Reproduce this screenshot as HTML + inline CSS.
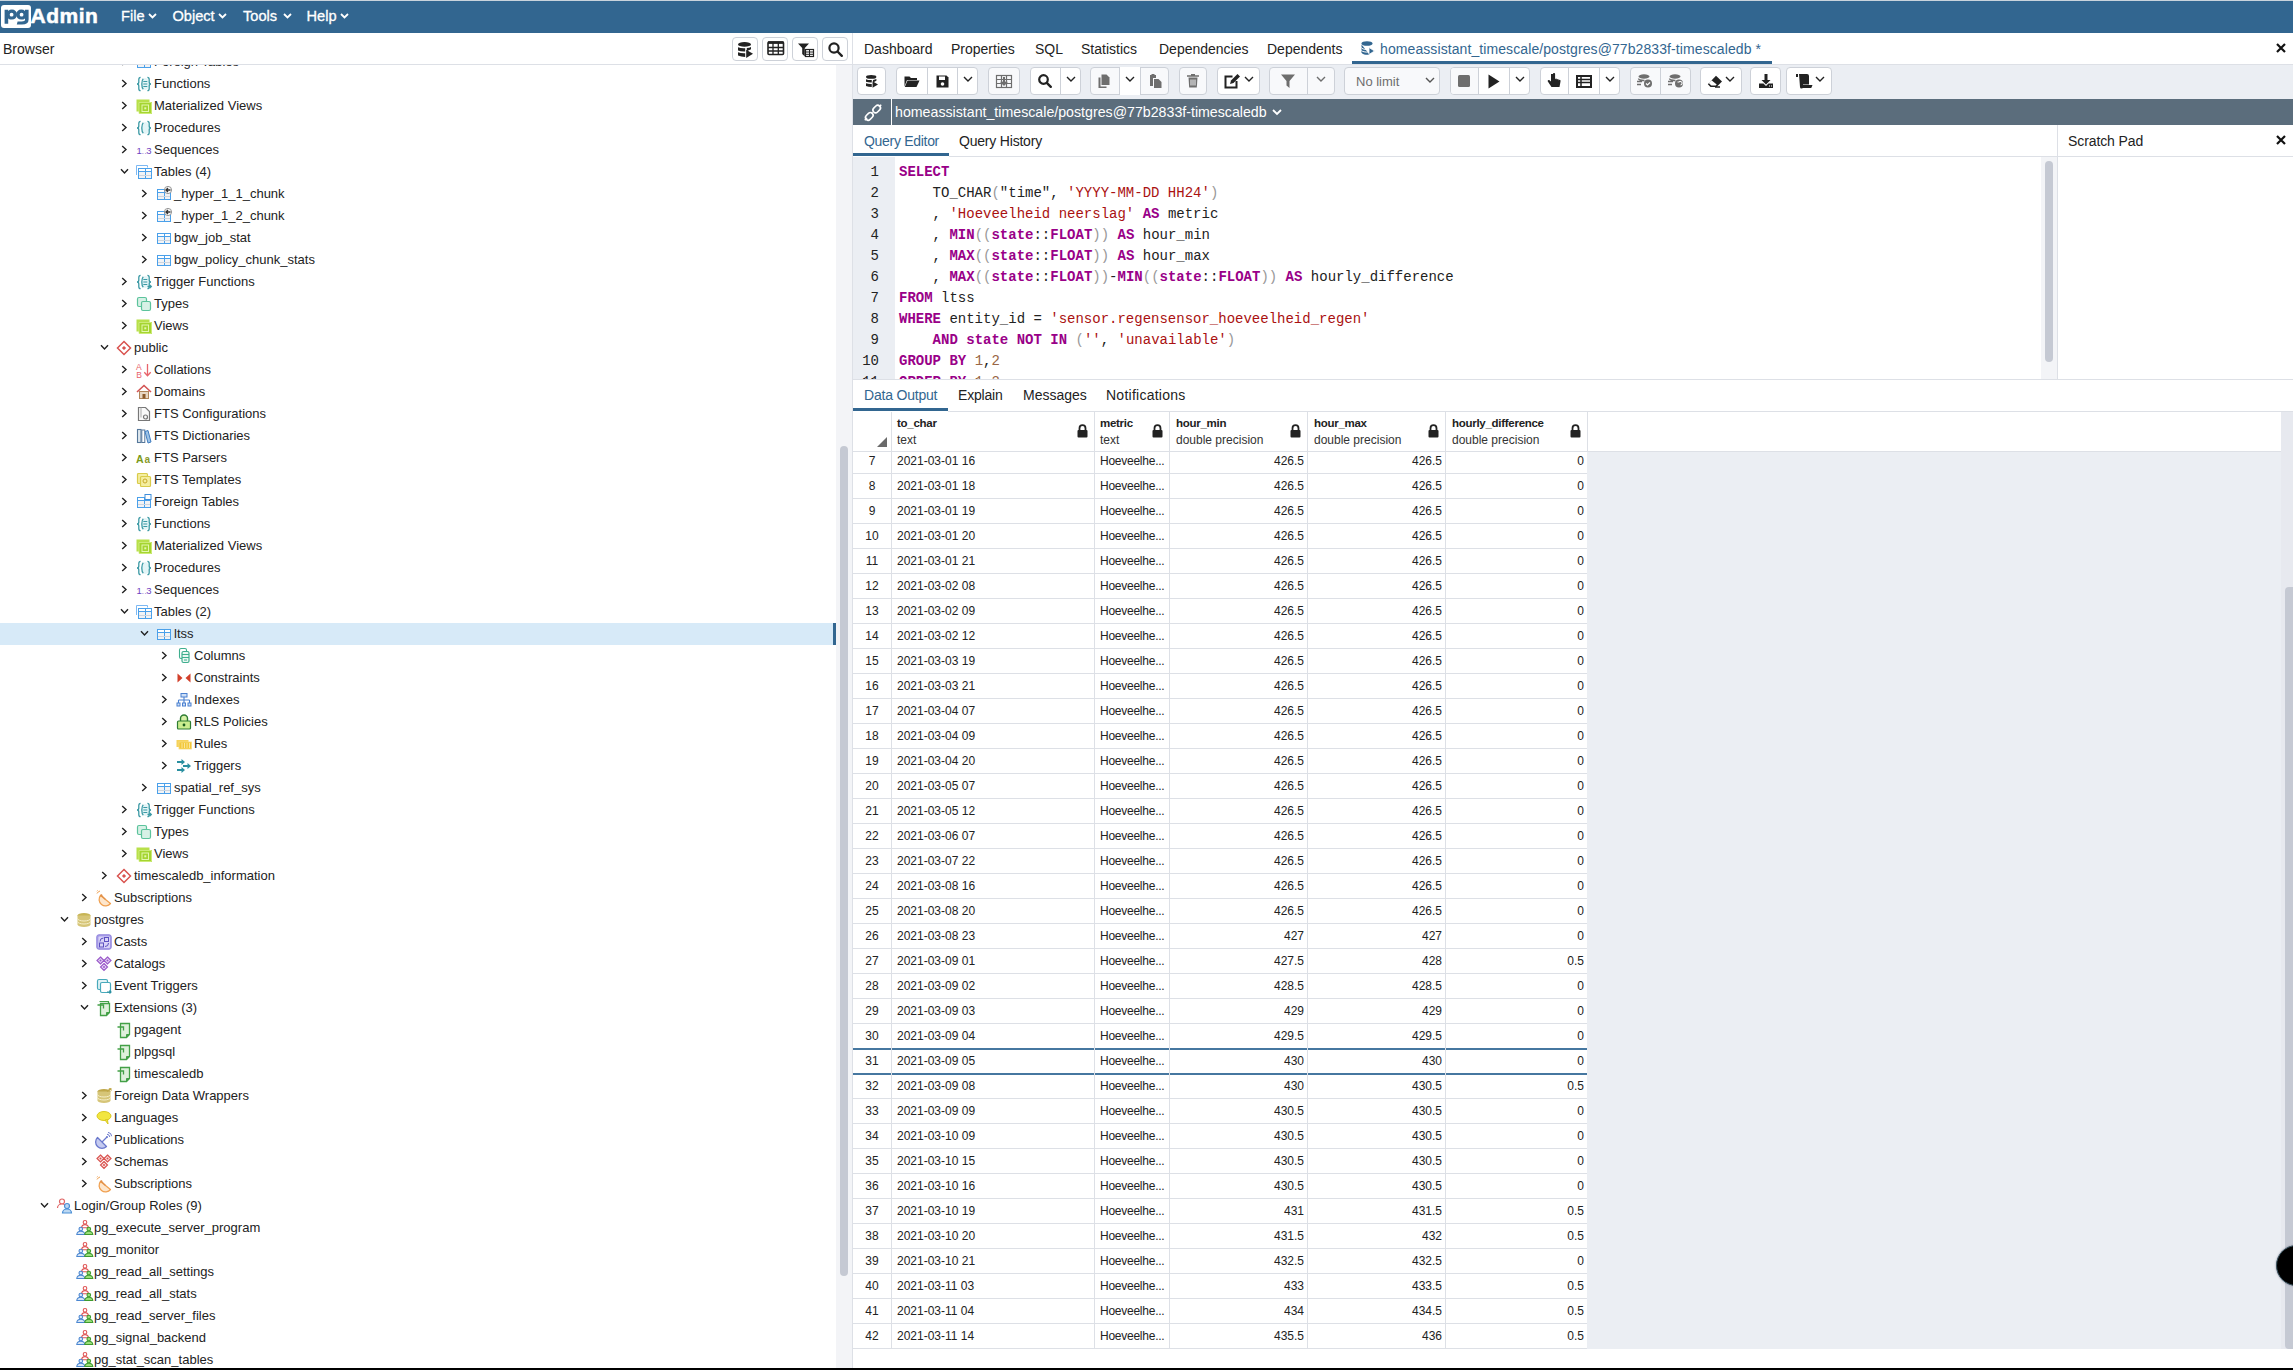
<!DOCTYPE html><html><head><meta charset="utf-8"><style>
*{box-sizing:border-box;margin:0;padding:0}
html,body{width:2293px;height:1370px;overflow:hidden;background:#fff;font-family:"Liberation Sans",sans-serif;color:#222}
.a{position:absolute}
.t{position:absolute;white-space:nowrap;line-height:1}
svg{position:absolute;overflow:visible}
</style></head><body><div class="a" style="left:0px;top:0px;width:2293px;height:33px;background:#326690"></div><div class="a" style="left:0px;top:0px;width:2293px;height:1px;background:#c9d3dc"></div><div class="a" style="left:1px;top:5px;width:30px;height:23px;background:#fff;border-radius:3px"></div><svg style="left:1px;top:5px;" width="30" height="23" viewBox="0 0 30 23"><path d="M3.6 4.8h3.6v1.2Q8.6 4.6 11 4.6a5 5 0 0 1 0 10Q8.6 14.6 7.2 13.4v5.4H3.6Z M10.6 7.8a1.9 1.9 0 1 0 0.01 3.8 1.9 1.9 0 1 0 0-3.8Z" fill="#326690" fill-rule="evenodd"/><path d="M27.6 4.8h-3.6v1.2Q22.6 4.6 20.2 4.6a5 5 0 0 0 0 10Q22.6 14.6 24 13.4v1.4Q24 16.4 20.6 16.4L16.6 16.4 15.8 19.4H21Q27.6 19.4 27.6 14.4Z M20.6 7.8a1.9 1.9 0 1 1-0.01 3.8 1.9 1.9 0 1 1 0-3.8Z" fill="#326690" fill-rule="evenodd"/></svg><div class="t" style="left:30.5px;top:4.5px;font-size:21px;color:#fff;font-weight:bold;letter-spacing:0.5px;-webkit-text-stroke:0.5px #fff;">Admin</div><div class="t" style="left:121px;top:9px;font-size:14.6px;color:#fff;font-weight:normal;-webkit-text-stroke:0.3px #fff;">File</div><svg style="left:148px;top:13px;" width="9" height="6" viewBox="0 0 9 6"><path d="M1 1 L4.5 4.5 L8 1" stroke="#fff" stroke-width="1.8" fill="none"/></svg><div class="t" style="left:172.5px;top:9px;font-size:14.6px;color:#fff;font-weight:normal;-webkit-text-stroke:0.3px #fff;">Object</div><svg style="left:218.1px;top:13px;" width="9" height="6" viewBox="0 0 9 6"><path d="M1 1 L4.5 4.5 L8 1" stroke="#fff" stroke-width="1.8" fill="none"/></svg><div class="t" style="left:243px;top:9px;font-size:14.6px;color:#fff;font-weight:normal;-webkit-text-stroke:0.3px #fff;">Tools</div><svg style="left:282.6px;top:13px;" width="9" height="6" viewBox="0 0 9 6"><path d="M1 1 L4.5 4.5 L8 1" stroke="#fff" stroke-width="1.8" fill="none"/></svg><div class="t" style="left:306.5px;top:9px;font-size:14.6px;color:#fff;font-weight:normal;-webkit-text-stroke:0.3px #fff;">Help</div><svg style="left:340.2px;top:13px;" width="9" height="6" viewBox="0 0 9 6"><path d="M1 1 L4.5 4.5 L8 1" stroke="#fff" stroke-width="1.8" fill="none"/></svg><div class="t" style="left:3px;top:42px;font-size:14px;color:#222;font-weight:normal;">Browser</div><div class="a" style="left:0px;top:64px;width:852px;height:1px;background:#dde0e6"></div><div class="a" style="left:732px;top:37px;width:26px;height:24px;border:1px solid #cdd1d8;border-radius:4px;background:#fff"></div><div class="a" style="left:762px;top:37px;width:26px;height:24px;border:1px solid #cdd1d8;border-radius:4px;background:#fff"></div><div class="a" style="left:792px;top:37px;width:26px;height:24px;border:1px solid #cdd1d8;border-radius:4px;background:#fff"></div><div class="a" style="left:822px;top:37px;width:26px;height:24px;border:1px solid #cdd1d8;border-radius:4px;background:#fff"></div><div class="a" style="left:852px;top:33px;width:1px;height:1337px;background:#dde0e6"></div><div class="a" style="left:836px;top:65px;width:16px;height:1303px;background:#f3f4f7"></div><div class="a" style="left:840px;top:446px;width:8px;height:830px;background:#c5c9d3;border-radius:4px"></div><div class="a" style="left:0;top:65px;width:836px;height:1303px;overflow:hidden"><svg style="left:121px;top:-8px" width="7" height="9" viewBox="0 0 7 9"><path d="M1.2 1 5 4.5 1.2 8" stroke="#222" stroke-width="1.4" fill="none"/></svg><svg style="left:136px;top:-11px" width="16" height="16" viewBox="0 0 16 16"><rect x="1.5" y="3.5" width="13" height="10" fill="#f2f3f5" stroke="#4aa0ea" stroke-width="1"/><rect x="2" y="4" width="12" height="2.5" fill="#fff"/><path d="M1.5 6.5h13M8.5 3.5v10" stroke="#4aa0ea" stroke-width="1"/><path d="M2 10.5h12" stroke="#cdd5de" stroke-width="1"/><rect x="9" y="0.5" width="6" height="5" fill="#fff" stroke="#3f8fdc" stroke-width="1"/></svg><div class="t" style="left:154px;top:-10px;font-size:13px">Foreign Tables</div><svg style="left:121px;top:14px" width="7" height="9" viewBox="0 0 7 9"><path d="M1.2 1 5 4.5 1.2 8" stroke="#222" stroke-width="1.4" fill="none"/></svg><svg style="left:136px;top:11px" width="16" height="16" viewBox="0 0 16 16"><ellipse cx="9.3" cy="8" rx="3.8" ry="6" fill="#e3f5f7"/><path d="M4.6 1.3Q2.8 1.3 2.8 3.5V6Q2.8 8 1 8Q2.8 8 2.8 10V12.5Q2.8 14.7 4.6 14.7" stroke="#3c9aa5" stroke-width="1.3" fill="none"/><path d="M7.3 2.8C5.3 4.5 5.3 11.5 7.3 13.2" stroke="#3c9aa5" stroke-width="1.3" fill="none"/><path d="M11.4 1.3Q13.2 1.3 13.2 3.5V6Q13.2 8 15 8Q13.2 8 13.2 10V12.5Q13.2 14.7 11.4 14.7" stroke="#3c9aa5" stroke-width="1.3" fill="none"/><path d="M7.3 5.5h4M7.3 8h4M7.3 10.5h4" stroke="#3c9aa5" stroke-width="1.2"/></svg><div class="t" style="left:154px;top:12px;font-size:13px">Functions</div><svg style="left:121px;top:36px" width="7" height="9" viewBox="0 0 7 9"><path d="M1.2 1 5 4.5 1.2 8" stroke="#222" stroke-width="1.4" fill="none"/></svg><svg style="left:136px;top:33px" width="16" height="16" viewBox="0 0 16 16"><rect x="0.5" y="1.5" width="13" height="12" fill="#b8e04a"/><rect x="3" y="4" width="13" height="12" fill="#a5d530"/><path d="M3 4.5h12.5v11H3Z" fill="none" stroke="#d6f08a" stroke-width="0.8"/><rect x="6" y="7" width="6.5" height="6.5" fill="none" stroke="#e4f7b0" stroke-width="1"/><rect x="8.3" y="9.3" width="2" height="2" fill="#e4f7b0"/></svg><div class="t" style="left:154px;top:34px;font-size:13px">Materialized Views</div><svg style="left:121px;top:58px" width="7" height="9" viewBox="0 0 7 9"><path d="M1.2 1 5 4.5 1.2 8" stroke="#222" stroke-width="1.4" fill="none"/></svg><svg style="left:136px;top:55px" width="16" height="16" viewBox="0 0 16 16"><ellipse cx="9.3" cy="8" rx="3.8" ry="6" fill="#e3f5f7"/><path d="M4.6 1.3Q2.8 1.3 2.8 3.5V6Q2.8 8 1 8Q2.8 8 2.8 10V12.5Q2.8 14.7 4.6 14.7" stroke="#3c9aa5" stroke-width="1.3" fill="none"/><path d="M7.3 2.8C5.3 4.5 5.3 11.5 7.3 13.2" stroke="#3c9aa5" stroke-width="1.3" fill="none"/><path d="M11.4 1.3Q13.2 1.3 13.2 3.5V6Q13.2 8 15 8Q13.2 8 13.2 10V12.5Q13.2 14.7 11.4 14.7" stroke="#3c9aa5" stroke-width="1.3" fill="none"/></svg><div class="t" style="left:154px;top:56px;font-size:13px">Procedures</div><svg style="left:121px;top:80px" width="7" height="9" viewBox="0 0 7 9"><path d="M1.2 1 5 4.5 1.2 8" stroke="#222" stroke-width="1.4" fill="none"/></svg><svg style="left:136px;top:77px" width="16" height="16" viewBox="0 0 16 16"><text x="0.5" y="12" font-family="Liberation Sans" font-size="9.5" fill="#6f42c1">1</text><text x="5.5" y="12" font-family="Liberation Sans" font-size="9.5" fill="#a58bd8">..</text><text x="10.3" y="12" font-family="Liberation Sans" font-size="9.5" fill="#6f42c1">3</text></svg><div class="t" style="left:154px;top:78px;font-size:13px">Sequences</div><svg style="left:120px;top:103px" width="9" height="7" viewBox="0 0 9 7"><path d="M1 1.2 4.5 5 8 1.2" stroke="#222" stroke-width="1.4" fill="none"/></svg><svg style="left:136px;top:99px" width="16" height="16" viewBox="0 0 16 16"><path d="M0.5 11V1.5h11v2" stroke="#7db8f2" stroke-width="1" fill="none"/><rect x="2.5" y="4.5" width="13" height="10" fill="#f2f3f5" stroke="#4aa0ea" stroke-width="1"/><rect x="3" y="5" width="12" height="2.5" fill="#fff"/><path d="M2.5 7.5h13M9.5 4.5v10" stroke="#4aa0ea" stroke-width="1"/><path d="M3 11.5h12" stroke="#cdd5de" stroke-width="1"/></svg><div class="t" style="left:154px;top:100px;font-size:13px">Tables (4)</div><svg style="left:141px;top:124px" width="7" height="9" viewBox="0 0 7 9"><path d="M1.2 1 5 4.5 1.2 8" stroke="#222" stroke-width="1.4" fill="none"/></svg><svg style="left:156px;top:121px" width="16" height="16" viewBox="0 0 16 16"><rect x="1.5" y="3.5" width="13" height="10" fill="#f2f3f5" stroke="#4aa0ea" stroke-width="1"/><rect x="2" y="4" width="12" height="2.5" fill="#fff"/><path d="M1.5 6.5h13M8.5 3.5v10" stroke="#4aa0ea" stroke-width="1"/><path d="M2 10.5h12" stroke="#cdd5de" stroke-width="1"/><circle cx="12" cy="4" r="3.6" fill="#fff" stroke="#888" stroke-width="0.9"/><path d="M14.5 4h-4.2M12 2 10 4l2 2" stroke="#333" stroke-width="1.4" fill="none"/></svg><div class="t" style="left:174px;top:122px;font-size:13px">_hyper_1_1_chunk</div><svg style="left:141px;top:146px" width="7" height="9" viewBox="0 0 7 9"><path d="M1.2 1 5 4.5 1.2 8" stroke="#222" stroke-width="1.4" fill="none"/></svg><svg style="left:156px;top:143px" width="16" height="16" viewBox="0 0 16 16"><rect x="1.5" y="3.5" width="13" height="10" fill="#f2f3f5" stroke="#4aa0ea" stroke-width="1"/><rect x="2" y="4" width="12" height="2.5" fill="#fff"/><path d="M1.5 6.5h13M8.5 3.5v10" stroke="#4aa0ea" stroke-width="1"/><path d="M2 10.5h12" stroke="#cdd5de" stroke-width="1"/><circle cx="12" cy="4" r="3.6" fill="#fff" stroke="#888" stroke-width="0.9"/><path d="M14.5 4h-4.2M12 2 10 4l2 2" stroke="#333" stroke-width="1.4" fill="none"/></svg><div class="t" style="left:174px;top:144px;font-size:13px">_hyper_1_2_chunk</div><svg style="left:141px;top:168px" width="7" height="9" viewBox="0 0 7 9"><path d="M1.2 1 5 4.5 1.2 8" stroke="#222" stroke-width="1.4" fill="none"/></svg><svg style="left:156px;top:165px" width="16" height="16" viewBox="0 0 16 16"><rect x="1.5" y="3.5" width="13" height="10" fill="#f2f3f5" stroke="#4aa0ea" stroke-width="1"/><rect x="2" y="4" width="12" height="2.5" fill="#fff"/><path d="M1.5 6.5h13M8.5 3.5v10" stroke="#4aa0ea" stroke-width="1"/><path d="M2 10.5h12" stroke="#cdd5de" stroke-width="1"/></svg><div class="t" style="left:174px;top:166px;font-size:13px">bgw_job_stat</div><svg style="left:141px;top:190px" width="7" height="9" viewBox="0 0 7 9"><path d="M1.2 1 5 4.5 1.2 8" stroke="#222" stroke-width="1.4" fill="none"/></svg><svg style="left:156px;top:187px" width="16" height="16" viewBox="0 0 16 16"><rect x="1.5" y="3.5" width="13" height="10" fill="#f2f3f5" stroke="#4aa0ea" stroke-width="1"/><rect x="2" y="4" width="12" height="2.5" fill="#fff"/><path d="M1.5 6.5h13M8.5 3.5v10" stroke="#4aa0ea" stroke-width="1"/><path d="M2 10.5h12" stroke="#cdd5de" stroke-width="1"/></svg><div class="t" style="left:174px;top:188px;font-size:13px">bgw_policy_chunk_stats</div><svg style="left:121px;top:212px" width="7" height="9" viewBox="0 0 7 9"><path d="M1.2 1 5 4.5 1.2 8" stroke="#222" stroke-width="1.4" fill="none"/></svg><svg style="left:136px;top:209px" width="16" height="16" viewBox="0 0 16 16"><ellipse cx="9.3" cy="8" rx="3.8" ry="6" fill="#e3f5f7"/><path d="M4.6 1.3Q2.8 1.3 2.8 3.5V6Q2.8 8 1 8Q2.8 8 2.8 10V12.5Q2.8 14.7 4.6 14.7" stroke="#3c9aa5" stroke-width="1.3" fill="none"/><path d="M7.3 2.8C5.3 4.5 5.3 11.5 7.3 13.2" stroke="#3c9aa5" stroke-width="1.3" fill="none"/><path d="M11.4 1.3Q13.2 1.3 13.2 3.5V6Q13.2 8 15 8Q13.2 8 13.2 10V12.5Q13.2 14.7 11.4 14.7" stroke="#3c9aa5" stroke-width="1.3" fill="none"/><path d="M7.3 5.5h4M7.3 8h4M7.3 10.5h4" stroke="#3c9aa5" stroke-width="1.2"/><path d="M11.5 12.5h3.5M13.5 10.8l1.8 1.7-1.8 1.7" stroke="#3c9aa5" stroke-width="1.3" fill="none"/></svg><div class="t" style="left:154px;top:210px;font-size:13px">Trigger Functions</div><svg style="left:121px;top:234px" width="7" height="9" viewBox="0 0 7 9"><path d="M1.2 1 5 4.5 1.2 8" stroke="#222" stroke-width="1.4" fill="none"/></svg><svg style="left:136px;top:231px" width="16" height="16" viewBox="0 0 16 16"><rect x="1.5" y="1.5" width="9" height="9" rx="1.5" fill="#d7f1e6" stroke="#5cc39c" stroke-width="1.2"/><rect x="5.5" y="5.5" width="9" height="9" rx="1.5" fill="#d7f1e6" stroke="#5cc39c" stroke-width="1.2"/></svg><div class="t" style="left:154px;top:232px;font-size:13px">Types</div><svg style="left:121px;top:256px" width="7" height="9" viewBox="0 0 7 9"><path d="M1.2 1 5 4.5 1.2 8" stroke="#222" stroke-width="1.4" fill="none"/></svg><svg style="left:136px;top:253px" width="16" height="16" viewBox="0 0 16 16"><rect x="0.5" y="1.5" width="13" height="12" fill="#b8e04a"/><rect x="3" y="4" width="13" height="12" fill="#a5d530"/><path d="M3 4.5h12.5v11H3Z" fill="none" stroke="#d6f08a" stroke-width="0.8"/><rect x="6" y="7" width="6.5" height="6.5" fill="none" stroke="#e4f7b0" stroke-width="1"/><rect x="8.3" y="9.3" width="2" height="2" fill="#e4f7b0"/></svg><div class="t" style="left:154px;top:254px;font-size:13px">Views</div><svg style="left:100px;top:279px" width="9" height="7" viewBox="0 0 9 7"><path d="M1 1.2 4.5 5 8 1.2" stroke="#222" stroke-width="1.4" fill="none"/></svg><svg style="left:116px;top:275px" width="16" height="16" viewBox="0 0 16 16"><path d="M8 1.5 14.5 8 8 14.5 1.5 8Z" fill="#fff" stroke="#d9534f" stroke-width="1.5"/><rect x="6.5" y="6.5" width="3" height="3" fill="#d9534f" transform="rotate(45 8 8)"/></svg><div class="t" style="left:134px;top:276px;font-size:13px">public</div><svg style="left:121px;top:300px" width="7" height="9" viewBox="0 0 7 9"><path d="M1.2 1 5 4.5 1.2 8" stroke="#222" stroke-width="1.4" fill="none"/></svg><svg style="left:136px;top:297px" width="16" height="16" viewBox="0 0 16 16"><text x="0" y="7.5" font-family="Liberation Sans" font-size="8.5" fill="#e8636b">A</text><text x="0.3" y="15.5" font-family="Liberation Sans" font-size="8.5" fill="#e8636b">B</text><path d="M11.5 2v11.5M8.3 10.2l3.2 3.6 3.2-3.6" stroke="#e8636b" stroke-width="1.3" fill="none"/></svg><div class="t" style="left:154px;top:298px;font-size:13px">Collations</div><svg style="left:121px;top:322px" width="7" height="9" viewBox="0 0 7 9"><path d="M1.2 1 5 4.5 1.2 8" stroke="#222" stroke-width="1.4" fill="none"/></svg><svg style="left:136px;top:319px" width="16" height="16" viewBox="0 0 16 16"><path d="M1 8 8 1.5 15 8" stroke="#d35454" stroke-width="1.6" fill="none"/><rect x="3.5" y="7.5" width="9" height="7" fill="#e7d7c4" stroke="#b0855a"/><rect x="6.5" y="10" width="3" height="4.5" fill="#8b5a2b"/></svg><div class="t" style="left:154px;top:320px;font-size:13px">Domains</div><svg style="left:121px;top:344px" width="7" height="9" viewBox="0 0 7 9"><path d="M1.2 1 5 4.5 1.2 8" stroke="#222" stroke-width="1.4" fill="none"/></svg><svg style="left:136px;top:341px" width="16" height="16" viewBox="0 0 16 16"><path d="M2.5 1.5h7l4 4v9h-11z" fill="#fafafa" stroke="#777" stroke-width="1.2"/><circle cx="9.5" cy="11" r="2" fill="none" stroke="#777" stroke-width="1.2"/><path d="M5 1.5v10" stroke="#aaa"/></svg><div class="t" style="left:154px;top:342px;font-size:13px">FTS Configurations</div><svg style="left:121px;top:366px" width="7" height="9" viewBox="0 0 7 9"><path d="M1.2 1 5 4.5 1.2 8" stroke="#222" stroke-width="1.4" fill="none"/></svg><svg style="left:136px;top:363px" width="16" height="16" viewBox="0 0 16 16"><rect x="1.5" y="1.5" width="3.5" height="13" fill="#dfe8ef" stroke="#56779a" stroke-width="1.1"/><rect x="5.8" y="2" width="3" height="12.5" fill="#fff" stroke="#56779a" stroke-width="1"/><path d="M9 3.5 12 2.5 15 14 12 15Z" fill="#9ec4e6" stroke="#3f7cc0" stroke-width="1"/></svg><div class="t" style="left:154px;top:364px;font-size:13px">FTS Dictionaries</div><svg style="left:121px;top:388px" width="7" height="9" viewBox="0 0 7 9"><path d="M1.2 1 5 4.5 1.2 8" stroke="#222" stroke-width="1.4" fill="none"/></svg><svg style="left:136px;top:385px" width="16" height="16" viewBox="0 0 16 16"><text x="0" y="12.5" font-family="Liberation Sans" font-size="10.5" font-weight="bold" fill="#7a9a1a">A</text><text x="8.5" y="12.5" font-family="Liberation Sans" font-size="10" font-weight="bold" fill="#8a9a2a">a</text></svg><div class="t" style="left:154px;top:386px;font-size:13px">FTS Parsers</div><svg style="left:121px;top:410px" width="7" height="9" viewBox="0 0 7 9"><path d="M1.2 1 5 4.5 1.2 8" stroke="#222" stroke-width="1.4" fill="none"/></svg><svg style="left:136px;top:407px" width="16" height="16" viewBox="0 0 16 16"><rect x="1.5" y="1.5" width="10" height="10" rx="1" fill="#f4eea0" stroke="#d9cb4a" stroke-width="1.2"/><rect x="4.5" y="4.5" width="10" height="10" rx="1" fill="#f4eea0" stroke="#d9cb4a" stroke-width="1.2"/><circle cx="9" cy="9" r="2" fill="none" stroke="#c8a82a"/></svg><div class="t" style="left:154px;top:408px;font-size:13px">FTS Templates</div><svg style="left:121px;top:432px" width="7" height="9" viewBox="0 0 7 9"><path d="M1.2 1 5 4.5 1.2 8" stroke="#222" stroke-width="1.4" fill="none"/></svg><svg style="left:136px;top:429px" width="16" height="16" viewBox="0 0 16 16"><rect x="1.5" y="3.5" width="13" height="10" fill="#f2f3f5" stroke="#4aa0ea" stroke-width="1"/><rect x="2" y="4" width="12" height="2.5" fill="#fff"/><path d="M1.5 6.5h13M8.5 3.5v10" stroke="#4aa0ea" stroke-width="1"/><path d="M2 10.5h12" stroke="#cdd5de" stroke-width="1"/><rect x="9" y="0.5" width="6" height="5" fill="#fff" stroke="#3f8fdc" stroke-width="1"/></svg><div class="t" style="left:154px;top:430px;font-size:13px">Foreign Tables</div><svg style="left:121px;top:454px" width="7" height="9" viewBox="0 0 7 9"><path d="M1.2 1 5 4.5 1.2 8" stroke="#222" stroke-width="1.4" fill="none"/></svg><svg style="left:136px;top:451px" width="16" height="16" viewBox="0 0 16 16"><ellipse cx="9.3" cy="8" rx="3.8" ry="6" fill="#e3f5f7"/><path d="M4.6 1.3Q2.8 1.3 2.8 3.5V6Q2.8 8 1 8Q2.8 8 2.8 10V12.5Q2.8 14.7 4.6 14.7" stroke="#3c9aa5" stroke-width="1.3" fill="none"/><path d="M7.3 2.8C5.3 4.5 5.3 11.5 7.3 13.2" stroke="#3c9aa5" stroke-width="1.3" fill="none"/><path d="M11.4 1.3Q13.2 1.3 13.2 3.5V6Q13.2 8 15 8Q13.2 8 13.2 10V12.5Q13.2 14.7 11.4 14.7" stroke="#3c9aa5" stroke-width="1.3" fill="none"/><path d="M7.3 5.5h4M7.3 8h4M7.3 10.5h4" stroke="#3c9aa5" stroke-width="1.2"/></svg><div class="t" style="left:154px;top:452px;font-size:13px">Functions</div><svg style="left:121px;top:476px" width="7" height="9" viewBox="0 0 7 9"><path d="M1.2 1 5 4.5 1.2 8" stroke="#222" stroke-width="1.4" fill="none"/></svg><svg style="left:136px;top:473px" width="16" height="16" viewBox="0 0 16 16"><rect x="0.5" y="1.5" width="13" height="12" fill="#b8e04a"/><rect x="3" y="4" width="13" height="12" fill="#a5d530"/><path d="M3 4.5h12.5v11H3Z" fill="none" stroke="#d6f08a" stroke-width="0.8"/><rect x="6" y="7" width="6.5" height="6.5" fill="none" stroke="#e4f7b0" stroke-width="1"/><rect x="8.3" y="9.3" width="2" height="2" fill="#e4f7b0"/></svg><div class="t" style="left:154px;top:474px;font-size:13px">Materialized Views</div><svg style="left:121px;top:498px" width="7" height="9" viewBox="0 0 7 9"><path d="M1.2 1 5 4.5 1.2 8" stroke="#222" stroke-width="1.4" fill="none"/></svg><svg style="left:136px;top:495px" width="16" height="16" viewBox="0 0 16 16"><ellipse cx="9.3" cy="8" rx="3.8" ry="6" fill="#e3f5f7"/><path d="M4.6 1.3Q2.8 1.3 2.8 3.5V6Q2.8 8 1 8Q2.8 8 2.8 10V12.5Q2.8 14.7 4.6 14.7" stroke="#3c9aa5" stroke-width="1.3" fill="none"/><path d="M7.3 2.8C5.3 4.5 5.3 11.5 7.3 13.2" stroke="#3c9aa5" stroke-width="1.3" fill="none"/><path d="M11.4 1.3Q13.2 1.3 13.2 3.5V6Q13.2 8 15 8Q13.2 8 13.2 10V12.5Q13.2 14.7 11.4 14.7" stroke="#3c9aa5" stroke-width="1.3" fill="none"/></svg><div class="t" style="left:154px;top:496px;font-size:13px">Procedures</div><svg style="left:121px;top:520px" width="7" height="9" viewBox="0 0 7 9"><path d="M1.2 1 5 4.5 1.2 8" stroke="#222" stroke-width="1.4" fill="none"/></svg><svg style="left:136px;top:517px" width="16" height="16" viewBox="0 0 16 16"><text x="0.5" y="12" font-family="Liberation Sans" font-size="9.5" fill="#6f42c1">1</text><text x="5.5" y="12" font-family="Liberation Sans" font-size="9.5" fill="#a58bd8">..</text><text x="10.3" y="12" font-family="Liberation Sans" font-size="9.5" fill="#6f42c1">3</text></svg><div class="t" style="left:154px;top:518px;font-size:13px">Sequences</div><svg style="left:120px;top:543px" width="9" height="7" viewBox="0 0 9 7"><path d="M1 1.2 4.5 5 8 1.2" stroke="#222" stroke-width="1.4" fill="none"/></svg><svg style="left:136px;top:539px" width="16" height="16" viewBox="0 0 16 16"><path d="M0.5 11V1.5h11v2" stroke="#7db8f2" stroke-width="1" fill="none"/><rect x="2.5" y="4.5" width="13" height="10" fill="#f2f3f5" stroke="#4aa0ea" stroke-width="1"/><rect x="3" y="5" width="12" height="2.5" fill="#fff"/><path d="M2.5 7.5h13M9.5 4.5v10" stroke="#4aa0ea" stroke-width="1"/><path d="M3 11.5h12" stroke="#cdd5de" stroke-width="1"/></svg><div class="t" style="left:154px;top:540px;font-size:13px">Tables (2)</div><div class="a" style="left:0;top:558px;width:836px;height:22px;background:#d7eaf8;border-right:3px solid #326690"></div><svg style="left:140px;top:565px" width="9" height="7" viewBox="0 0 9 7"><path d="M1 1.2 4.5 5 8 1.2" stroke="#222" stroke-width="1.4" fill="none"/></svg><svg style="left:156px;top:561px" width="16" height="16" viewBox="0 0 16 16"><rect x="1.5" y="3.5" width="13" height="10" fill="#f2f3f5" stroke="#4aa0ea" stroke-width="1"/><rect x="2" y="4" width="12" height="2.5" fill="#fff"/><path d="M1.5 6.5h13M8.5 3.5v10" stroke="#4aa0ea" stroke-width="1"/><path d="M2 10.5h12" stroke="#cdd5de" stroke-width="1"/></svg><div class="t" style="left:174px;top:562px;font-size:13px">ltss</div><svg style="left:161px;top:586px" width="7" height="9" viewBox="0 0 7 9"><path d="M1.2 1 5 4.5 1.2 8" stroke="#222" stroke-width="1.4" fill="none"/></svg><svg style="left:176px;top:583px" width="16" height="16" viewBox="0 0 16 16"><rect x="3.5" y="0.5" width="7" height="10" rx="1.5" fill="#fff" stroke="#3fae8e" stroke-width="1.1"/><rect x="6" y="3.5" width="7" height="11" rx="1.5" fill="#e9f7f2" stroke="#3fae8e" stroke-width="1.2"/><path d="M6 6.5h7M6 9.5h7M8 12h3" stroke="#3fae8e" stroke-width="1"/></svg><div class="t" style="left:194px;top:584px;font-size:13px">Columns</div><svg style="left:161px;top:608px" width="7" height="9" viewBox="0 0 7 9"><path d="M1.2 1 5 4.5 1.2 8" stroke="#222" stroke-width="1.4" fill="none"/></svg><svg style="left:176px;top:605px" width="16" height="16" viewBox="0 0 16 16"><path d="M1.5 3.5 6.5 8 1.5 12.5Z" fill="#d23f2a"/><path d="M14.5 3.5 9.5 8 14.5 12.5Z" fill="#d23f2a"/></svg><div class="t" style="left:194px;top:606px;font-size:13px">Constraints</div><svg style="left:161px;top:630px" width="7" height="9" viewBox="0 0 7 9"><path d="M1.2 1 5 4.5 1.2 8" stroke="#222" stroke-width="1.4" fill="none"/></svg><svg style="left:176px;top:627px" width="16" height="16" viewBox="0 0 16 16"><rect x="5" y="1.5" width="6" height="3.5" fill="#cfe0f7" stroke="#4a80d0"/><path d="M8 5v3M2.5 8h11M2.5 8v3M8 8v3M13.5 8v3" stroke="#4a80d0" stroke-width="1.1" fill="none"/><rect x="1" y="11" width="3" height="3" fill="#cfe0f7" stroke="#4a80d0"/><rect x="6.5" y="11" width="3" height="3" fill="#cfe0f7" stroke="#4a80d0"/><rect x="12" y="11" width="3" height="3" fill="#cfe0f7" stroke="#4a80d0"/></svg><div class="t" style="left:194px;top:628px;font-size:13px">Indexes</div><svg style="left:161px;top:652px" width="7" height="9" viewBox="0 0 7 9"><path d="M1.2 1 5 4.5 1.2 8" stroke="#222" stroke-width="1.4" fill="none"/></svg><svg style="left:176px;top:649px" width="16" height="16" viewBox="0 0 16 16"><path d="M4.5 7V4.5a3.5 3.5 0 0 1 7 0V7" stroke="#2e7d32" stroke-width="1.4" fill="#d8f0a8"/><rect x="1.5" y="7" width="13" height="8" rx="1" fill="#c9ec8e" stroke="#2e7d32" stroke-width="1.2"/><circle cx="8" cy="11" r="1.4" fill="#1b5e20"/></svg><div class="t" style="left:194px;top:650px;font-size:13px">RLS Policies</div><svg style="left:161px;top:674px" width="7" height="9" viewBox="0 0 7 9"><path d="M1.2 1 5 4.5 1.2 8" stroke="#222" stroke-width="1.4" fill="none"/></svg><svg style="left:176px;top:671px" width="16" height="16" viewBox="0 0 16 16"><rect x="0.5" y="4" width="12" height="7" fill="#f6d25a"/><rect x="3" y="6" width="12.5" height="7" fill="#f3c83a" stroke="#f6dc80" stroke-width="0.8"/><path d="M6 7v5M8.5 7v5M11 7v5M13.5 7v5" stroke="#fbe9a6" stroke-width="0.9"/></svg><div class="t" style="left:194px;top:672px;font-size:13px">Rules</div><svg style="left:161px;top:696px" width="7" height="9" viewBox="0 0 7 9"><path d="M1.2 1 5 4.5 1.2 8" stroke="#222" stroke-width="1.4" fill="none"/></svg><svg style="left:176px;top:693px" width="16" height="16" viewBox="0 0 16 16"><g fill="#2a8fa0"><path d="M1 3h4.5V1l3.5 3-3.5 3V5H1Z"/><path d="M1 11h4.5V9l3.5 3-3.5 3V13H1Z"/><path d="M7 7h4.5V5l3.5 3-3.5 3V9H7Z"/></g></svg><div class="t" style="left:194px;top:694px;font-size:13px">Triggers</div><svg style="left:141px;top:718px" width="7" height="9" viewBox="0 0 7 9"><path d="M1.2 1 5 4.5 1.2 8" stroke="#222" stroke-width="1.4" fill="none"/></svg><svg style="left:156px;top:715px" width="16" height="16" viewBox="0 0 16 16"><rect x="1.5" y="3.5" width="13" height="10" fill="#f2f3f5" stroke="#4aa0ea" stroke-width="1"/><rect x="2" y="4" width="12" height="2.5" fill="#fff"/><path d="M1.5 6.5h13M8.5 3.5v10" stroke="#4aa0ea" stroke-width="1"/><path d="M2 10.5h12" stroke="#cdd5de" stroke-width="1"/></svg><div class="t" style="left:174px;top:716px;font-size:13px">spatial_ref_sys</div><svg style="left:121px;top:740px" width="7" height="9" viewBox="0 0 7 9"><path d="M1.2 1 5 4.5 1.2 8" stroke="#222" stroke-width="1.4" fill="none"/></svg><svg style="left:136px;top:737px" width="16" height="16" viewBox="0 0 16 16"><ellipse cx="9.3" cy="8" rx="3.8" ry="6" fill="#e3f5f7"/><path d="M4.6 1.3Q2.8 1.3 2.8 3.5V6Q2.8 8 1 8Q2.8 8 2.8 10V12.5Q2.8 14.7 4.6 14.7" stroke="#3c9aa5" stroke-width="1.3" fill="none"/><path d="M7.3 2.8C5.3 4.5 5.3 11.5 7.3 13.2" stroke="#3c9aa5" stroke-width="1.3" fill="none"/><path d="M11.4 1.3Q13.2 1.3 13.2 3.5V6Q13.2 8 15 8Q13.2 8 13.2 10V12.5Q13.2 14.7 11.4 14.7" stroke="#3c9aa5" stroke-width="1.3" fill="none"/><path d="M7.3 5.5h4M7.3 8h4M7.3 10.5h4" stroke="#3c9aa5" stroke-width="1.2"/><path d="M11.5 12.5h3.5M13.5 10.8l1.8 1.7-1.8 1.7" stroke="#3c9aa5" stroke-width="1.3" fill="none"/></svg><div class="t" style="left:154px;top:738px;font-size:13px">Trigger Functions</div><svg style="left:121px;top:762px" width="7" height="9" viewBox="0 0 7 9"><path d="M1.2 1 5 4.5 1.2 8" stroke="#222" stroke-width="1.4" fill="none"/></svg><svg style="left:136px;top:759px" width="16" height="16" viewBox="0 0 16 16"><rect x="1.5" y="1.5" width="9" height="9" rx="1.5" fill="#d7f1e6" stroke="#5cc39c" stroke-width="1.2"/><rect x="5.5" y="5.5" width="9" height="9" rx="1.5" fill="#d7f1e6" stroke="#5cc39c" stroke-width="1.2"/></svg><div class="t" style="left:154px;top:760px;font-size:13px">Types</div><svg style="left:121px;top:784px" width="7" height="9" viewBox="0 0 7 9"><path d="M1.2 1 5 4.5 1.2 8" stroke="#222" stroke-width="1.4" fill="none"/></svg><svg style="left:136px;top:781px" width="16" height="16" viewBox="0 0 16 16"><rect x="0.5" y="1.5" width="13" height="12" fill="#b8e04a"/><rect x="3" y="4" width="13" height="12" fill="#a5d530"/><path d="M3 4.5h12.5v11H3Z" fill="none" stroke="#d6f08a" stroke-width="0.8"/><rect x="6" y="7" width="6.5" height="6.5" fill="none" stroke="#e4f7b0" stroke-width="1"/><rect x="8.3" y="9.3" width="2" height="2" fill="#e4f7b0"/></svg><div class="t" style="left:154px;top:782px;font-size:13px">Views</div><svg style="left:101px;top:806px" width="7" height="9" viewBox="0 0 7 9"><path d="M1.2 1 5 4.5 1.2 8" stroke="#222" stroke-width="1.4" fill="none"/></svg><svg style="left:116px;top:803px" width="16" height="16" viewBox="0 0 16 16"><path d="M8 1.5 14.5 8 8 14.5 1.5 8Z" fill="#fff" stroke="#d9534f" stroke-width="1.5"/><rect x="6.5" y="6.5" width="3" height="3" fill="#d9534f" transform="rotate(45 8 8)"/></svg><div class="t" style="left:134px;top:804px;font-size:13px">timescaledb_information</div><svg style="left:81px;top:828px" width="7" height="9" viewBox="0 0 7 9"><path d="M1.2 1 5 4.5 1.2 8" stroke="#222" stroke-width="1.4" fill="none"/></svg><svg style="left:96px;top:825px" width="16" height="16" viewBox="0 0 16 16"><path d="M4.5 5.5A6.3 6.3 0 0 0 14.5 13.5Z" fill="#fde6cc" stroke="#f0a050" stroke-width="1.3" stroke-linejoin="round"/><path d="M9.5 9.5 5 5" stroke="#e0904a" stroke-width="1.1"/><circle cx="5.3" cy="5.3" r="1.1" fill="#e0904a"/><path d="M1 3.5Q2 1.5 4 1M0.8 1.2 1.6 0.5" stroke="#f0a050" stroke-width="1"  fill="none"/></svg><div class="t" style="left:114px;top:826px;font-size:13px">Subscriptions</div><svg style="left:60px;top:851px" width="9" height="7" viewBox="0 0 9 7"><path d="M1 1.2 4.5 5 8 1.2" stroke="#222" stroke-width="1.4" fill="none"/></svg><svg style="left:76px;top:847px" width="16" height="16" viewBox="0 0 16 16"><ellipse cx="8" cy="3.5" rx="6.5" ry="2.5" fill="#c7b455"/><path d="M1.5 3.5v9a6.5 2.5 0 0 0 13 0v-9" fill="#d6c578"/><path d="M1.5 6.5a6.5 2.5 0 0 0 13 0M1.5 9.5a6.5 2.5 0 0 0 13 0" stroke="#f5efc8" stroke-width="1" fill="none"/></svg><div class="t" style="left:94px;top:848px;font-size:13px">postgres</div><svg style="left:81px;top:872px" width="7" height="9" viewBox="0 0 7 9"><path d="M1.2 1 5 4.5 1.2 8" stroke="#222" stroke-width="1.4" fill="none"/></svg><svg style="left:96px;top:869px" width="16" height="16" viewBox="0 0 16 16"><rect x="0.8" y="0.8" width="14.4" height="14.4" rx="2" fill="#aaa0e8" stroke="#8d80dc" stroke-width="1"/><rect x="2.5" y="2.5" width="11.5" height="11.5" rx="1" fill="#d9d3f7"/><rect x="8.5" y="3.5" width="4" height="4" fill="none" stroke="#5b4fc0" stroke-width="1"/><rect x="3.5" y="9" width="4" height="4" fill="none" stroke="#5b4fc0" stroke-width="1"/><path d="M4 7.5Q4 4 7.5 4M12.5 9Q12.5 12.5 9 12.5" stroke="#5b4fc0" stroke-width="1" fill="none"/></svg><div class="t" style="left:114px;top:870px;font-size:13px">Casts</div><svg style="left:81px;top:894px" width="7" height="9" viewBox="0 0 7 9"><path d="M1.2 1 5 4.5 1.2 8" stroke="#222" stroke-width="1.4" fill="none"/></svg><svg style="left:96px;top:891px" width="16" height="16" viewBox="0 0 16 16"><path d="M4.5 1 8 4.5 4.5 8 1 4.5Z M11.5 1 15 4.5 11.5 8 8 4.5Z M8 7.5 11.5 11 8 14.5 4.5 11Z" fill="#e5d6f5" stroke="#9a59c9" stroke-width="1.2"/><circle cx="4.5" cy="4.5" r="1" fill="#9a59c9"/><circle cx="11.5" cy="4.5" r="1" fill="#9a59c9"/><circle cx="8" cy="11" r="1" fill="#9a59c9"/></svg><div class="t" style="left:114px;top:892px;font-size:13px">Catalogs</div><svg style="left:81px;top:916px" width="7" height="9" viewBox="0 0 7 9"><path d="M1.2 1 5 4.5 1.2 8" stroke="#222" stroke-width="1.4" fill="none"/></svg><svg style="left:96px;top:913px" width="16" height="16" viewBox="0 0 16 16"><rect x="1.5" y="1.5" width="10" height="10" rx="1.5" fill="#e2f3f6" stroke="#48a9bb" stroke-width="1.2"/><rect x="4.5" y="4.5" width="10" height="10" rx="1.5" fill="#fff" stroke="#48a9bb" stroke-width="1.2"/><path d="M11 14h4M13.5 12.5l1.5 1.5-1.5 1.5" stroke="#2a8fa0" stroke-width="1.2" fill="none"/></svg><div class="t" style="left:114px;top:914px;font-size:13px">Event Triggers</div><svg style="left:80px;top:939px" width="9" height="7" viewBox="0 0 9 7"><path d="M1 1.2 4.5 5 8 1.2" stroke="#222" stroke-width="1.4" fill="none"/></svg><svg style="left:96px;top:935px" width="16" height="16" viewBox="0 0 16 16"><path d="M3.5 1.5h9v3" stroke="#43a047" stroke-width="1.2" fill="none"/><path d="M4.5 3.5h9v9l-3 3h-6z" fill="#dff0dc" stroke="#43a047" stroke-width="1.3"/><path d="M1.5 5h6v3.5" stroke="#43a047" stroke-width="1.3" fill="none"/><path d="M10.5 15.5v-3h3" fill="#43a047" stroke="#43a047"/></svg><div class="t" style="left:114px;top:936px;font-size:13px">Extensions (3)</div><svg style="left:116px;top:957px" width="16" height="16" viewBox="0 0 16 16"><path d="M4.5 1.5h9v11l-3 3h-6z" fill="#dff0dc" stroke="#43a047" stroke-width="1.3"/><path d="M1.5 5h6v3.5" stroke="#43a047" stroke-width="1.3" fill="none"/><path d="M10.5 15.5v-3h3" fill="#43a047" stroke="#43a047"/></svg><div class="t" style="left:134px;top:958px;font-size:13px">pgagent</div><svg style="left:116px;top:979px" width="16" height="16" viewBox="0 0 16 16"><path d="M4.5 1.5h9v11l-3 3h-6z" fill="#dff0dc" stroke="#43a047" stroke-width="1.3"/><path d="M1.5 5h6v3.5" stroke="#43a047" stroke-width="1.3" fill="none"/><path d="M10.5 15.5v-3h3" fill="#43a047" stroke="#43a047"/></svg><div class="t" style="left:134px;top:980px;font-size:13px">plpgsql</div><svg style="left:116px;top:1001px" width="16" height="16" viewBox="0 0 16 16"><path d="M4.5 1.5h9v11l-3 3h-6z" fill="#dff0dc" stroke="#43a047" stroke-width="1.3"/><path d="M1.5 5h6v3.5" stroke="#43a047" stroke-width="1.3" fill="none"/><path d="M10.5 15.5v-3h3" fill="#43a047" stroke="#43a047"/></svg><div class="t" style="left:134px;top:1002px;font-size:13px">timescaledb</div><svg style="left:81px;top:1026px" width="7" height="9" viewBox="0 0 7 9"><path d="M1.2 1 5 4.5 1.2 8" stroke="#222" stroke-width="1.4" fill="none"/></svg><svg style="left:96px;top:1023px" width="16" height="16" viewBox="0 0 16 16"><ellipse cx="8" cy="3.5" rx="6.5" ry="2.5" fill="#c0a84a"/><path d="M1.5 3.5v9a6.5 2.5 0 0 0 13 0v-9" fill="#d6c578"/><path d="M1.5 6.5a6.5 2.5 0 0 0 13 0M1.5 9.5a6.5 2.5 0 0 0 13 0" stroke="#f5efc8" stroke-width="1" fill="none"/><path d="M11 3.5 15 .5" stroke="#c0a84a" stroke-width="1.5"/><path d="M12.5 0.2h3v3" fill="#c0a84a"/></svg><div class="t" style="left:114px;top:1024px;font-size:13px">Foreign Data Wrappers</div><svg style="left:81px;top:1048px" width="7" height="9" viewBox="0 0 7 9"><path d="M1.2 1 5 4.5 1.2 8" stroke="#222" stroke-width="1.4" fill="none"/></svg><svg style="left:96px;top:1045px" width="16" height="16" viewBox="0 0 16 16"><ellipse cx="8" cy="6" rx="7" ry="4.5" fill="#f2e640" stroke="#d9c820" stroke-width="1"/><path d="M9 10l3 4 -0.5 -4.5Z" fill="#f2e640" stroke="#d9c820" stroke-width="1"/></svg><div class="t" style="left:114px;top:1046px;font-size:13px">Languages</div><svg style="left:81px;top:1070px" width="7" height="9" viewBox="0 0 7 9"><path d="M1.2 1 5 4.5 1.2 8" stroke="#222" stroke-width="1.4" fill="none"/></svg><svg style="left:96px;top:1067px" width="16" height="16" viewBox="0 0 16 16"><path d="M1.5 5.5A6.3 6.3 0 0 0 10.5 14.5Z" fill="#c5cbf0" stroke="#6a78cc" stroke-width="1.3" stroke-linejoin="round"/><path d="M6 10 11 5" stroke="#6a78cc" stroke-width="1.2"/><circle cx="11" cy="5" r="1" fill="#6a78cc"/><path d="M11 2.2Q13.6 2.6 13.8 5M12 0.4Q15.5 0.8 15.6 4.2" stroke="#6a78cc" stroke-width="1" fill="none"/></svg><div class="t" style="left:114px;top:1068px;font-size:13px">Publications</div><svg style="left:81px;top:1092px" width="7" height="9" viewBox="0 0 7 9"><path d="M1.2 1 5 4.5 1.2 8" stroke="#222" stroke-width="1.4" fill="none"/></svg><svg style="left:96px;top:1089px" width="16" height="16" viewBox="0 0 16 16"><path d="M4.5 1 8 4.5 4.5 8 1 4.5Z M11.5 1 15 4.5 11.5 8 8 4.5Z M8 7.5 11.5 11 8 14.5 4.5 11Z" fill="#fbe1e1" stroke="#d9534f" stroke-width="1.2"/><circle cx="4.5" cy="4.5" r="1" fill="#d9534f"/><circle cx="11.5" cy="4.5" r="1" fill="#d9534f"/><circle cx="8" cy="11" r="1" fill="#d9534f"/></svg><div class="t" style="left:114px;top:1090px;font-size:13px">Schemas</div><svg style="left:81px;top:1114px" width="7" height="9" viewBox="0 0 7 9"><path d="M1.2 1 5 4.5 1.2 8" stroke="#222" stroke-width="1.4" fill="none"/></svg><svg style="left:96px;top:1111px" width="16" height="16" viewBox="0 0 16 16"><path d="M4.5 5.5A6.3 6.3 0 0 0 14.5 13.5Z" fill="#fde6cc" stroke="#f0a050" stroke-width="1.3" stroke-linejoin="round"/><path d="M9.5 9.5 5 5" stroke="#e0904a" stroke-width="1.1"/><circle cx="5.3" cy="5.3" r="1.1" fill="#e0904a"/><path d="M1 3.5Q2 1.5 4 1M0.8 1.2 1.6 0.5" stroke="#f0a050" stroke-width="1"  fill="none"/></svg><div class="t" style="left:114px;top:1112px;font-size:13px">Subscriptions</div><svg style="left:40px;top:1137px" width="9" height="7" viewBox="0 0 9 7"><path d="M1 1.2 4.5 5 8 1.2" stroke="#222" stroke-width="1.4" fill="none"/></svg><svg style="left:56px;top:1133px" width="16" height="16" viewBox="0 0 16 16"><circle cx="6" cy="3.5" r="2.5" fill="#fff" stroke="#e06666" stroke-width="1.2"/><path d="M1.5 10a4.5 4 0 0 1 9 0" fill="#fff" stroke="#e06666" stroke-width="1.2"/><circle cx="11" cy="8" r="2.5" fill="#bcd8f2" stroke="#4a8fd6" stroke-width="1.2"/><path d="M6.5 15a4.5 4 0 0 1 9 0z" fill="#bcd8f2" stroke="#4a8fd6" stroke-width="1.2"/></svg><div class="t" style="left:74px;top:1134px;font-size:13px">Login/Group Roles (9)</div><svg style="left:76px;top:1155px" width="16" height="16" viewBox="0 0 16 16"><circle cx="9" cy="2.3" r="1.8" fill="#fff" stroke="#e05555" stroke-width="1.1"/><path d="M5.6 7.8Q5.8 4.6 9 4.6Q12.2 4.6 12.4 7.8Z" fill="#fff" stroke="#e05555" stroke-width="1.1"/><circle cx="4.8" cy="9" r="1.8" fill="#d6e6f8" stroke="#4a86d0" stroke-width="1.1"/><path d="M0.8 14.5Q1 11.2 4.8 11.2Q8.6 11.2 8.8 14.5Z" fill="#d6e6f8" stroke="#4a86d0" stroke-width="1.1"/><circle cx="12.8" cy="9" r="1.8" fill="#9be07a" stroke="#3e9a2e" stroke-width="1.1"/><path d="M8.8 14.5Q9 11.2 12.8 11.2Q16.6 11.2 16.8 14.5Z" fill="#9be07a" stroke="#3e9a2e" stroke-width="1.1"/></svg><div class="t" style="left:94px;top:1156px;font-size:13px">pg_execute_server_program</div><svg style="left:76px;top:1177px" width="16" height="16" viewBox="0 0 16 16"><circle cx="9" cy="2.3" r="1.8" fill="#fff" stroke="#e05555" stroke-width="1.1"/><path d="M5.6 7.8Q5.8 4.6 9 4.6Q12.2 4.6 12.4 7.8Z" fill="#fff" stroke="#e05555" stroke-width="1.1"/><circle cx="4.8" cy="9" r="1.8" fill="#d6e6f8" stroke="#4a86d0" stroke-width="1.1"/><path d="M0.8 14.5Q1 11.2 4.8 11.2Q8.6 11.2 8.8 14.5Z" fill="#d6e6f8" stroke="#4a86d0" stroke-width="1.1"/><circle cx="12.8" cy="9" r="1.8" fill="#9be07a" stroke="#3e9a2e" stroke-width="1.1"/><path d="M8.8 14.5Q9 11.2 12.8 11.2Q16.6 11.2 16.8 14.5Z" fill="#9be07a" stroke="#3e9a2e" stroke-width="1.1"/></svg><div class="t" style="left:94px;top:1178px;font-size:13px">pg_monitor</div><svg style="left:76px;top:1199px" width="16" height="16" viewBox="0 0 16 16"><circle cx="9" cy="2.3" r="1.8" fill="#fff" stroke="#e05555" stroke-width="1.1"/><path d="M5.6 7.8Q5.8 4.6 9 4.6Q12.2 4.6 12.4 7.8Z" fill="#fff" stroke="#e05555" stroke-width="1.1"/><circle cx="4.8" cy="9" r="1.8" fill="#d6e6f8" stroke="#4a86d0" stroke-width="1.1"/><path d="M0.8 14.5Q1 11.2 4.8 11.2Q8.6 11.2 8.8 14.5Z" fill="#d6e6f8" stroke="#4a86d0" stroke-width="1.1"/><circle cx="12.8" cy="9" r="1.8" fill="#9be07a" stroke="#3e9a2e" stroke-width="1.1"/><path d="M8.8 14.5Q9 11.2 12.8 11.2Q16.6 11.2 16.8 14.5Z" fill="#9be07a" stroke="#3e9a2e" stroke-width="1.1"/></svg><div class="t" style="left:94px;top:1200px;font-size:13px">pg_read_all_settings</div><svg style="left:76px;top:1221px" width="16" height="16" viewBox="0 0 16 16"><circle cx="9" cy="2.3" r="1.8" fill="#fff" stroke="#e05555" stroke-width="1.1"/><path d="M5.6 7.8Q5.8 4.6 9 4.6Q12.2 4.6 12.4 7.8Z" fill="#fff" stroke="#e05555" stroke-width="1.1"/><circle cx="4.8" cy="9" r="1.8" fill="#d6e6f8" stroke="#4a86d0" stroke-width="1.1"/><path d="M0.8 14.5Q1 11.2 4.8 11.2Q8.6 11.2 8.8 14.5Z" fill="#d6e6f8" stroke="#4a86d0" stroke-width="1.1"/><circle cx="12.8" cy="9" r="1.8" fill="#9be07a" stroke="#3e9a2e" stroke-width="1.1"/><path d="M8.8 14.5Q9 11.2 12.8 11.2Q16.6 11.2 16.8 14.5Z" fill="#9be07a" stroke="#3e9a2e" stroke-width="1.1"/></svg><div class="t" style="left:94px;top:1222px;font-size:13px">pg_read_all_stats</div><svg style="left:76px;top:1243px" width="16" height="16" viewBox="0 0 16 16"><circle cx="9" cy="2.3" r="1.8" fill="#fff" stroke="#e05555" stroke-width="1.1"/><path d="M5.6 7.8Q5.8 4.6 9 4.6Q12.2 4.6 12.4 7.8Z" fill="#fff" stroke="#e05555" stroke-width="1.1"/><circle cx="4.8" cy="9" r="1.8" fill="#d6e6f8" stroke="#4a86d0" stroke-width="1.1"/><path d="M0.8 14.5Q1 11.2 4.8 11.2Q8.6 11.2 8.8 14.5Z" fill="#d6e6f8" stroke="#4a86d0" stroke-width="1.1"/><circle cx="12.8" cy="9" r="1.8" fill="#9be07a" stroke="#3e9a2e" stroke-width="1.1"/><path d="M8.8 14.5Q9 11.2 12.8 11.2Q16.6 11.2 16.8 14.5Z" fill="#9be07a" stroke="#3e9a2e" stroke-width="1.1"/></svg><div class="t" style="left:94px;top:1244px;font-size:13px">pg_read_server_files</div><svg style="left:76px;top:1265px" width="16" height="16" viewBox="0 0 16 16"><circle cx="9" cy="2.3" r="1.8" fill="#fff" stroke="#e05555" stroke-width="1.1"/><path d="M5.6 7.8Q5.8 4.6 9 4.6Q12.2 4.6 12.4 7.8Z" fill="#fff" stroke="#e05555" stroke-width="1.1"/><circle cx="4.8" cy="9" r="1.8" fill="#d6e6f8" stroke="#4a86d0" stroke-width="1.1"/><path d="M0.8 14.5Q1 11.2 4.8 11.2Q8.6 11.2 8.8 14.5Z" fill="#d6e6f8" stroke="#4a86d0" stroke-width="1.1"/><circle cx="12.8" cy="9" r="1.8" fill="#9be07a" stroke="#3e9a2e" stroke-width="1.1"/><path d="M8.8 14.5Q9 11.2 12.8 11.2Q16.6 11.2 16.8 14.5Z" fill="#9be07a" stroke="#3e9a2e" stroke-width="1.1"/></svg><div class="t" style="left:94px;top:1266px;font-size:13px">pg_signal_backend</div><svg style="left:76px;top:1287px" width="16" height="16" viewBox="0 0 16 16"><circle cx="9" cy="2.3" r="1.8" fill="#fff" stroke="#e05555" stroke-width="1.1"/><path d="M5.6 7.8Q5.8 4.6 9 4.6Q12.2 4.6 12.4 7.8Z" fill="#fff" stroke="#e05555" stroke-width="1.1"/><circle cx="4.8" cy="9" r="1.8" fill="#d6e6f8" stroke="#4a86d0" stroke-width="1.1"/><path d="M0.8 14.5Q1 11.2 4.8 11.2Q8.6 11.2 8.8 14.5Z" fill="#d6e6f8" stroke="#4a86d0" stroke-width="1.1"/><circle cx="12.8" cy="9" r="1.8" fill="#9be07a" stroke="#3e9a2e" stroke-width="1.1"/><path d="M8.8 14.5Q9 11.2 12.8 11.2Q16.6 11.2 16.8 14.5Z" fill="#9be07a" stroke="#3e9a2e" stroke-width="1.1"/></svg><div class="t" style="left:94px;top:1288px;font-size:13px">pg_stat_scan_tables</div></div><div class="t" style="left:864px;top:42px;font-size:14px;color:#222;font-weight:normal;">Dashboard</div><div class="t" style="left:951px;top:42px;font-size:14px;color:#222;font-weight:normal;">Properties</div><div class="t" style="left:1035px;top:42px;font-size:14px;color:#222;font-weight:normal;">SQL</div><div class="t" style="left:1081px;top:42px;font-size:14px;color:#222;font-weight:normal;">Statistics</div><div class="t" style="left:1159px;top:42px;font-size:14px;color:#222;font-weight:normal;">Dependencies</div><div class="t" style="left:1267px;top:42px;font-size:14px;color:#222;font-weight:normal;">Dependents</div><div class="t" style="left:1380px;top:42px;font-size:14px;color:#326690;font-weight:normal;letter-spacing:0.09px;">homeassistant_timescale/postgres@77b2833f-timescaledb *</div><div class="a" style="left:1352px;top:61px;width:420px;height:3px;background:#326690"></div><div class="a" style="left:853px;top:64px;width:1440px;height:1px;background:#dde0e6"></div><div class="a" style="left:853px;top:65px;width:1440px;height:34px;background:#ebeef3"></div><div class="a" style="left:853px;top:99px;width:1440px;height:26px;background:#5b6d7c"></div><div class="a" style="left:891px;top:99px;width:1px;height:26px;background:#fff"></div><div class="t" style="left:895px;top:105px;font-size:14.2px;color:#fff;font-weight:normal;">homeassistant_timescale/postgres@77b2833f-timescaledb</div><div class="t" style="left:864px;top:134px;font-size:14px;color:#326690;font-weight:normal;letter-spacing:-0.3px;">Query Editor</div><div class="t" style="left:959px;top:134px;font-size:14px;color:#222;font-weight:normal;letter-spacing:-0.2px;">Query History</div><div class="a" style="left:853px;top:153px;width:96px;height:3px;background:#326690"></div><div class="a" style="left:949px;top:156px;width:1344px;height:1px;background:#dde0e6"></div><div class="a" style="left:2057px;top:125px;width:1px;height:255px;background:#dde0e6"></div><div class="t" style="left:2068px;top:134px;font-size:14px;color:#222;font-weight:normal;letter-spacing:-0.1px;">Scratch Pad</div><div class="a" style="left:853px;top:157px;width:42px;height:222px;background:#ebeef3"></div><div class="a" style="left:2041px;top:157px;width:16px;height:222px;background:#f3f4f7"></div><div class="a" style="left:2045px;top:161px;width:8px;height:201px;background:#c5c9d3;border-radius:4px"></div><div class="a" style="left:853px;top:379px;width:1440px;height:1px;background:#dde0e6"></div><div class="a" style="left:853px;top:157px;width:1188px;height:222px;overflow:hidden"><div class="t" style="left:0;width:26px;text-align:right;top:8px;font-size:14px;font-family:'Liberation Mono', monospace;color:#222">1</div><div class="t" style="left:46px;top:8px;font-size:14px;font-family:'Liberation Mono', monospace;white-space:pre"><span style="color:#908;font-weight:bold">SELECT</span></div><div class="t" style="left:0;width:26px;text-align:right;top:29px;font-size:14px;font-family:'Liberation Mono', monospace;color:#222">2</div><div class="t" style="left:46px;top:29px;font-size:14px;font-family:'Liberation Mono', monospace;white-space:pre">    TO_CHAR<span style="color:#999">(</span>"time", <span style="color:#a11">&#x27;YYYY-MM-DD HH24&#x27;</span><span style="color:#999">)</span></div><div class="t" style="left:0;width:26px;text-align:right;top:50px;font-size:14px;font-family:'Liberation Mono', monospace;color:#222">3</div><div class="t" style="left:46px;top:50px;font-size:14px;font-family:'Liberation Mono', monospace;white-space:pre">    , <span style="color:#a11">&#x27;Hoeveelheid neerslag&#x27;</span> <span style="color:#908;font-weight:bold">AS</span> metric</div><div class="t" style="left:0;width:26px;text-align:right;top:71px;font-size:14px;font-family:'Liberation Mono', monospace;color:#222">4</div><div class="t" style="left:46px;top:71px;font-size:14px;font-family:'Liberation Mono', monospace;white-space:pre">    , <span style="color:#908;font-weight:bold">MIN</span><span style="color:#999">((</span><span style="color:#908;font-weight:bold">state</span>::<span style="color:#908;font-weight:bold">FLOAT</span><span style="color:#999">))</span> <span style="color:#908;font-weight:bold">AS</span> hour_min</div><div class="t" style="left:0;width:26px;text-align:right;top:92px;font-size:14px;font-family:'Liberation Mono', monospace;color:#222">5</div><div class="t" style="left:46px;top:92px;font-size:14px;font-family:'Liberation Mono', monospace;white-space:pre">    , <span style="color:#908;font-weight:bold">MAX</span><span style="color:#999">((</span><span style="color:#908;font-weight:bold">state</span>::<span style="color:#908;font-weight:bold">FLOAT</span><span style="color:#999">))</span> <span style="color:#908;font-weight:bold">AS</span> hour_max</div><div class="t" style="left:0;width:26px;text-align:right;top:113px;font-size:14px;font-family:'Liberation Mono', monospace;color:#222">6</div><div class="t" style="left:46px;top:113px;font-size:14px;font-family:'Liberation Mono', monospace;white-space:pre">    , <span style="color:#908;font-weight:bold">MAX</span><span style="color:#999">((</span><span style="color:#908;font-weight:bold">state</span>::<span style="color:#908;font-weight:bold">FLOAT</span><span style="color:#999">))</span>-<span style="color:#908;font-weight:bold">MIN</span><span style="color:#999">((</span><span style="color:#908;font-weight:bold">state</span>::<span style="color:#908;font-weight:bold">FLOAT</span><span style="color:#999">))</span> <span style="color:#908;font-weight:bold">AS</span> hourly_difference</div><div class="t" style="left:0;width:26px;text-align:right;top:134px;font-size:14px;font-family:'Liberation Mono', monospace;color:#222">7</div><div class="t" style="left:46px;top:134px;font-size:14px;font-family:'Liberation Mono', monospace;white-space:pre"><span style="color:#908;font-weight:bold">FROM</span> ltss</div><div class="t" style="left:0;width:26px;text-align:right;top:155px;font-size:14px;font-family:'Liberation Mono', monospace;color:#222">8</div><div class="t" style="left:46px;top:155px;font-size:14px;font-family:'Liberation Mono', monospace;white-space:pre"><span style="color:#908;font-weight:bold">WHERE</span> entity_id = <span style="color:#a11">&#x27;sensor.regensensor_hoeveelheid_regen&#x27;</span></div><div class="t" style="left:0;width:26px;text-align:right;top:176px;font-size:14px;font-family:'Liberation Mono', monospace;color:#222">9</div><div class="t" style="left:46px;top:176px;font-size:14px;font-family:'Liberation Mono', monospace;white-space:pre">    <span style="color:#908;font-weight:bold">AND</span> <span style="color:#908;font-weight:bold">state</span> <span style="color:#908;font-weight:bold">NOT</span> <span style="color:#908;font-weight:bold">IN</span> <span style="color:#999">(</span><span style="color:#a11">&#x27;&#x27;</span>, <span style="color:#a11">&#x27;unavailable&#x27;</span><span style="color:#999">)</span></div><div class="t" style="left:0;width:26px;text-align:right;top:197px;font-size:14px;font-family:'Liberation Mono', monospace;color:#222">10</div><div class="t" style="left:46px;top:197px;font-size:14px;font-family:'Liberation Mono', monospace;white-space:pre"><span style="color:#908;font-weight:bold">GROUP</span> <span style="color:#908;font-weight:bold">BY</span> <span style="color:#964">1</span>,<span style="color:#964">2</span></div><div class="t" style="left:0;width:26px;text-align:right;top:218px;font-size:14px;font-family:'Liberation Mono', monospace;color:#222">11</div><div class="t" style="left:46px;top:218px;font-size:14px;font-family:'Liberation Mono', monospace;white-space:pre"><span style="color:#908;font-weight:bold">ORDER</span> <span style="color:#908;font-weight:bold">BY</span> <span style="color:#964">1</span>,<span style="color:#964">2</span></div></div><div class="a" style="left:853px;top:473px;width:734px;height:1px;background:#dde0e6"></div><div class="t" style="left:853px;width:38px;text-align:center;top:455px;font-size:12px">7</div><div class="t" style="left:897px;top:455px;font-size:12px">2021-03-01 16</div><div class="t" style="left:1100px;top:455px;font-size:12px;letter-spacing:-0.25px">Hoeveelhe...</div><div class="t" style="left:1169px;width:135px;text-align:right;top:455px;font-size:12px">426.5</div><div class="t" style="left:1307px;width:135px;text-align:right;top:455px;font-size:12px">426.5</div><div class="t" style="left:1445px;width:139px;text-align:right;top:455px;font-size:12px">0</div><div class="a" style="left:853px;top:498px;width:734px;height:1px;background:#dde0e6"></div><div class="t" style="left:853px;width:38px;text-align:center;top:480px;font-size:12px">8</div><div class="t" style="left:897px;top:480px;font-size:12px">2021-03-01 18</div><div class="t" style="left:1100px;top:480px;font-size:12px;letter-spacing:-0.25px">Hoeveelhe...</div><div class="t" style="left:1169px;width:135px;text-align:right;top:480px;font-size:12px">426.5</div><div class="t" style="left:1307px;width:135px;text-align:right;top:480px;font-size:12px">426.5</div><div class="t" style="left:1445px;width:139px;text-align:right;top:480px;font-size:12px">0</div><div class="a" style="left:853px;top:523px;width:734px;height:1px;background:#dde0e6"></div><div class="t" style="left:853px;width:38px;text-align:center;top:505px;font-size:12px">9</div><div class="t" style="left:897px;top:505px;font-size:12px">2021-03-01 19</div><div class="t" style="left:1100px;top:505px;font-size:12px;letter-spacing:-0.25px">Hoeveelhe...</div><div class="t" style="left:1169px;width:135px;text-align:right;top:505px;font-size:12px">426.5</div><div class="t" style="left:1307px;width:135px;text-align:right;top:505px;font-size:12px">426.5</div><div class="t" style="left:1445px;width:139px;text-align:right;top:505px;font-size:12px">0</div><div class="a" style="left:853px;top:548px;width:734px;height:1px;background:#dde0e6"></div><div class="t" style="left:853px;width:38px;text-align:center;top:530px;font-size:12px">10</div><div class="t" style="left:897px;top:530px;font-size:12px">2021-03-01 20</div><div class="t" style="left:1100px;top:530px;font-size:12px;letter-spacing:-0.25px">Hoeveelhe...</div><div class="t" style="left:1169px;width:135px;text-align:right;top:530px;font-size:12px">426.5</div><div class="t" style="left:1307px;width:135px;text-align:right;top:530px;font-size:12px">426.5</div><div class="t" style="left:1445px;width:139px;text-align:right;top:530px;font-size:12px">0</div><div class="a" style="left:853px;top:573px;width:734px;height:1px;background:#dde0e6"></div><div class="t" style="left:853px;width:38px;text-align:center;top:555px;font-size:12px">11</div><div class="t" style="left:897px;top:555px;font-size:12px">2021-03-01 21</div><div class="t" style="left:1100px;top:555px;font-size:12px;letter-spacing:-0.25px">Hoeveelhe...</div><div class="t" style="left:1169px;width:135px;text-align:right;top:555px;font-size:12px">426.5</div><div class="t" style="left:1307px;width:135px;text-align:right;top:555px;font-size:12px">426.5</div><div class="t" style="left:1445px;width:139px;text-align:right;top:555px;font-size:12px">0</div><div class="a" style="left:853px;top:598px;width:734px;height:1px;background:#dde0e6"></div><div class="t" style="left:853px;width:38px;text-align:center;top:580px;font-size:12px">12</div><div class="t" style="left:897px;top:580px;font-size:12px">2021-03-02 08</div><div class="t" style="left:1100px;top:580px;font-size:12px;letter-spacing:-0.25px">Hoeveelhe...</div><div class="t" style="left:1169px;width:135px;text-align:right;top:580px;font-size:12px">426.5</div><div class="t" style="left:1307px;width:135px;text-align:right;top:580px;font-size:12px">426.5</div><div class="t" style="left:1445px;width:139px;text-align:right;top:580px;font-size:12px">0</div><div class="a" style="left:853px;top:623px;width:734px;height:1px;background:#dde0e6"></div><div class="t" style="left:853px;width:38px;text-align:center;top:605px;font-size:12px">13</div><div class="t" style="left:897px;top:605px;font-size:12px">2021-03-02 09</div><div class="t" style="left:1100px;top:605px;font-size:12px;letter-spacing:-0.25px">Hoeveelhe...</div><div class="t" style="left:1169px;width:135px;text-align:right;top:605px;font-size:12px">426.5</div><div class="t" style="left:1307px;width:135px;text-align:right;top:605px;font-size:12px">426.5</div><div class="t" style="left:1445px;width:139px;text-align:right;top:605px;font-size:12px">0</div><div class="a" style="left:853px;top:648px;width:734px;height:1px;background:#dde0e6"></div><div class="t" style="left:853px;width:38px;text-align:center;top:630px;font-size:12px">14</div><div class="t" style="left:897px;top:630px;font-size:12px">2021-03-02 12</div><div class="t" style="left:1100px;top:630px;font-size:12px;letter-spacing:-0.25px">Hoeveelhe...</div><div class="t" style="left:1169px;width:135px;text-align:right;top:630px;font-size:12px">426.5</div><div class="t" style="left:1307px;width:135px;text-align:right;top:630px;font-size:12px">426.5</div><div class="t" style="left:1445px;width:139px;text-align:right;top:630px;font-size:12px">0</div><div class="a" style="left:853px;top:673px;width:734px;height:1px;background:#dde0e6"></div><div class="t" style="left:853px;width:38px;text-align:center;top:655px;font-size:12px">15</div><div class="t" style="left:897px;top:655px;font-size:12px">2021-03-03 19</div><div class="t" style="left:1100px;top:655px;font-size:12px;letter-spacing:-0.25px">Hoeveelhe...</div><div class="t" style="left:1169px;width:135px;text-align:right;top:655px;font-size:12px">426.5</div><div class="t" style="left:1307px;width:135px;text-align:right;top:655px;font-size:12px">426.5</div><div class="t" style="left:1445px;width:139px;text-align:right;top:655px;font-size:12px">0</div><div class="a" style="left:853px;top:698px;width:734px;height:1px;background:#dde0e6"></div><div class="t" style="left:853px;width:38px;text-align:center;top:680px;font-size:12px">16</div><div class="t" style="left:897px;top:680px;font-size:12px">2021-03-03 21</div><div class="t" style="left:1100px;top:680px;font-size:12px;letter-spacing:-0.25px">Hoeveelhe...</div><div class="t" style="left:1169px;width:135px;text-align:right;top:680px;font-size:12px">426.5</div><div class="t" style="left:1307px;width:135px;text-align:right;top:680px;font-size:12px">426.5</div><div class="t" style="left:1445px;width:139px;text-align:right;top:680px;font-size:12px">0</div><div class="a" style="left:853px;top:723px;width:734px;height:1px;background:#dde0e6"></div><div class="t" style="left:853px;width:38px;text-align:center;top:705px;font-size:12px">17</div><div class="t" style="left:897px;top:705px;font-size:12px">2021-03-04 07</div><div class="t" style="left:1100px;top:705px;font-size:12px;letter-spacing:-0.25px">Hoeveelhe...</div><div class="t" style="left:1169px;width:135px;text-align:right;top:705px;font-size:12px">426.5</div><div class="t" style="left:1307px;width:135px;text-align:right;top:705px;font-size:12px">426.5</div><div class="t" style="left:1445px;width:139px;text-align:right;top:705px;font-size:12px">0</div><div class="a" style="left:853px;top:748px;width:734px;height:1px;background:#dde0e6"></div><div class="t" style="left:853px;width:38px;text-align:center;top:730px;font-size:12px">18</div><div class="t" style="left:897px;top:730px;font-size:12px">2021-03-04 09</div><div class="t" style="left:1100px;top:730px;font-size:12px;letter-spacing:-0.25px">Hoeveelhe...</div><div class="t" style="left:1169px;width:135px;text-align:right;top:730px;font-size:12px">426.5</div><div class="t" style="left:1307px;width:135px;text-align:right;top:730px;font-size:12px">426.5</div><div class="t" style="left:1445px;width:139px;text-align:right;top:730px;font-size:12px">0</div><div class="a" style="left:853px;top:773px;width:734px;height:1px;background:#dde0e6"></div><div class="t" style="left:853px;width:38px;text-align:center;top:755px;font-size:12px">19</div><div class="t" style="left:897px;top:755px;font-size:12px">2021-03-04 20</div><div class="t" style="left:1100px;top:755px;font-size:12px;letter-spacing:-0.25px">Hoeveelhe...</div><div class="t" style="left:1169px;width:135px;text-align:right;top:755px;font-size:12px">426.5</div><div class="t" style="left:1307px;width:135px;text-align:right;top:755px;font-size:12px">426.5</div><div class="t" style="left:1445px;width:139px;text-align:right;top:755px;font-size:12px">0</div><div class="a" style="left:853px;top:798px;width:734px;height:1px;background:#dde0e6"></div><div class="t" style="left:853px;width:38px;text-align:center;top:780px;font-size:12px">20</div><div class="t" style="left:897px;top:780px;font-size:12px">2021-03-05 07</div><div class="t" style="left:1100px;top:780px;font-size:12px;letter-spacing:-0.25px">Hoeveelhe...</div><div class="t" style="left:1169px;width:135px;text-align:right;top:780px;font-size:12px">426.5</div><div class="t" style="left:1307px;width:135px;text-align:right;top:780px;font-size:12px">426.5</div><div class="t" style="left:1445px;width:139px;text-align:right;top:780px;font-size:12px">0</div><div class="a" style="left:853px;top:823px;width:734px;height:1px;background:#dde0e6"></div><div class="t" style="left:853px;width:38px;text-align:center;top:805px;font-size:12px">21</div><div class="t" style="left:897px;top:805px;font-size:12px">2021-03-05 12</div><div class="t" style="left:1100px;top:805px;font-size:12px;letter-spacing:-0.25px">Hoeveelhe...</div><div class="t" style="left:1169px;width:135px;text-align:right;top:805px;font-size:12px">426.5</div><div class="t" style="left:1307px;width:135px;text-align:right;top:805px;font-size:12px">426.5</div><div class="t" style="left:1445px;width:139px;text-align:right;top:805px;font-size:12px">0</div><div class="a" style="left:853px;top:848px;width:734px;height:1px;background:#dde0e6"></div><div class="t" style="left:853px;width:38px;text-align:center;top:830px;font-size:12px">22</div><div class="t" style="left:897px;top:830px;font-size:12px">2021-03-06 07</div><div class="t" style="left:1100px;top:830px;font-size:12px;letter-spacing:-0.25px">Hoeveelhe...</div><div class="t" style="left:1169px;width:135px;text-align:right;top:830px;font-size:12px">426.5</div><div class="t" style="left:1307px;width:135px;text-align:right;top:830px;font-size:12px">426.5</div><div class="t" style="left:1445px;width:139px;text-align:right;top:830px;font-size:12px">0</div><div class="a" style="left:853px;top:873px;width:734px;height:1px;background:#dde0e6"></div><div class="t" style="left:853px;width:38px;text-align:center;top:855px;font-size:12px">23</div><div class="t" style="left:897px;top:855px;font-size:12px">2021-03-07 22</div><div class="t" style="left:1100px;top:855px;font-size:12px;letter-spacing:-0.25px">Hoeveelhe...</div><div class="t" style="left:1169px;width:135px;text-align:right;top:855px;font-size:12px">426.5</div><div class="t" style="left:1307px;width:135px;text-align:right;top:855px;font-size:12px">426.5</div><div class="t" style="left:1445px;width:139px;text-align:right;top:855px;font-size:12px">0</div><div class="a" style="left:853px;top:898px;width:734px;height:1px;background:#dde0e6"></div><div class="t" style="left:853px;width:38px;text-align:center;top:880px;font-size:12px">24</div><div class="t" style="left:897px;top:880px;font-size:12px">2021-03-08 16</div><div class="t" style="left:1100px;top:880px;font-size:12px;letter-spacing:-0.25px">Hoeveelhe...</div><div class="t" style="left:1169px;width:135px;text-align:right;top:880px;font-size:12px">426.5</div><div class="t" style="left:1307px;width:135px;text-align:right;top:880px;font-size:12px">426.5</div><div class="t" style="left:1445px;width:139px;text-align:right;top:880px;font-size:12px">0</div><div class="a" style="left:853px;top:923px;width:734px;height:1px;background:#dde0e6"></div><div class="t" style="left:853px;width:38px;text-align:center;top:905px;font-size:12px">25</div><div class="t" style="left:897px;top:905px;font-size:12px">2021-03-08 20</div><div class="t" style="left:1100px;top:905px;font-size:12px;letter-spacing:-0.25px">Hoeveelhe...</div><div class="t" style="left:1169px;width:135px;text-align:right;top:905px;font-size:12px">426.5</div><div class="t" style="left:1307px;width:135px;text-align:right;top:905px;font-size:12px">426.5</div><div class="t" style="left:1445px;width:139px;text-align:right;top:905px;font-size:12px">0</div><div class="a" style="left:853px;top:948px;width:734px;height:1px;background:#dde0e6"></div><div class="t" style="left:853px;width:38px;text-align:center;top:930px;font-size:12px">26</div><div class="t" style="left:897px;top:930px;font-size:12px">2021-03-08 23</div><div class="t" style="left:1100px;top:930px;font-size:12px;letter-spacing:-0.25px">Hoeveelhe...</div><div class="t" style="left:1169px;width:135px;text-align:right;top:930px;font-size:12px">427</div><div class="t" style="left:1307px;width:135px;text-align:right;top:930px;font-size:12px">427</div><div class="t" style="left:1445px;width:139px;text-align:right;top:930px;font-size:12px">0</div><div class="a" style="left:853px;top:973px;width:734px;height:1px;background:#dde0e6"></div><div class="t" style="left:853px;width:38px;text-align:center;top:955px;font-size:12px">27</div><div class="t" style="left:897px;top:955px;font-size:12px">2021-03-09 01</div><div class="t" style="left:1100px;top:955px;font-size:12px;letter-spacing:-0.25px">Hoeveelhe...</div><div class="t" style="left:1169px;width:135px;text-align:right;top:955px;font-size:12px">427.5</div><div class="t" style="left:1307px;width:135px;text-align:right;top:955px;font-size:12px">428</div><div class="t" style="left:1445px;width:139px;text-align:right;top:955px;font-size:12px">0.5</div><div class="a" style="left:853px;top:998px;width:734px;height:1px;background:#dde0e6"></div><div class="t" style="left:853px;width:38px;text-align:center;top:980px;font-size:12px">28</div><div class="t" style="left:897px;top:980px;font-size:12px">2021-03-09 02</div><div class="t" style="left:1100px;top:980px;font-size:12px;letter-spacing:-0.25px">Hoeveelhe...</div><div class="t" style="left:1169px;width:135px;text-align:right;top:980px;font-size:12px">428.5</div><div class="t" style="left:1307px;width:135px;text-align:right;top:980px;font-size:12px">428.5</div><div class="t" style="left:1445px;width:139px;text-align:right;top:980px;font-size:12px">0</div><div class="a" style="left:853px;top:1023px;width:734px;height:1px;background:#dde0e6"></div><div class="t" style="left:853px;width:38px;text-align:center;top:1005px;font-size:12px">29</div><div class="t" style="left:897px;top:1005px;font-size:12px">2021-03-09 03</div><div class="t" style="left:1100px;top:1005px;font-size:12px;letter-spacing:-0.25px">Hoeveelhe...</div><div class="t" style="left:1169px;width:135px;text-align:right;top:1005px;font-size:12px">429</div><div class="t" style="left:1307px;width:135px;text-align:right;top:1005px;font-size:12px">429</div><div class="t" style="left:1445px;width:139px;text-align:right;top:1005px;font-size:12px">0</div><div class="a" style="left:853px;top:1048px;width:734px;height:1px;background:#dde0e6"></div><div class="t" style="left:853px;width:38px;text-align:center;top:1030px;font-size:12px">30</div><div class="t" style="left:897px;top:1030px;font-size:12px">2021-03-09 04</div><div class="t" style="left:1100px;top:1030px;font-size:12px;letter-spacing:-0.25px">Hoeveelhe...</div><div class="t" style="left:1169px;width:135px;text-align:right;top:1030px;font-size:12px">429.5</div><div class="t" style="left:1307px;width:135px;text-align:right;top:1030px;font-size:12px">429.5</div><div class="t" style="left:1445px;width:139px;text-align:right;top:1030px;font-size:12px">0</div><div class="a" style="left:853px;top:1073px;width:734px;height:1px;background:#dde0e6"></div><div class="t" style="left:853px;width:38px;text-align:center;top:1055px;font-size:12px">31</div><div class="t" style="left:897px;top:1055px;font-size:12px">2021-03-09 05</div><div class="t" style="left:1100px;top:1055px;font-size:12px;letter-spacing:-0.25px">Hoeveelhe...</div><div class="t" style="left:1169px;width:135px;text-align:right;top:1055px;font-size:12px">430</div><div class="t" style="left:1307px;width:135px;text-align:right;top:1055px;font-size:12px">430</div><div class="t" style="left:1445px;width:139px;text-align:right;top:1055px;font-size:12px">0</div><div class="a" style="left:853px;top:1098px;width:734px;height:1px;background:#dde0e6"></div><div class="t" style="left:853px;width:38px;text-align:center;top:1080px;font-size:12px">32</div><div class="t" style="left:897px;top:1080px;font-size:12px">2021-03-09 08</div><div class="t" style="left:1100px;top:1080px;font-size:12px;letter-spacing:-0.25px">Hoeveelhe...</div><div class="t" style="left:1169px;width:135px;text-align:right;top:1080px;font-size:12px">430</div><div class="t" style="left:1307px;width:135px;text-align:right;top:1080px;font-size:12px">430.5</div><div class="t" style="left:1445px;width:139px;text-align:right;top:1080px;font-size:12px">0.5</div><div class="a" style="left:853px;top:1123px;width:734px;height:1px;background:#dde0e6"></div><div class="t" style="left:853px;width:38px;text-align:center;top:1105px;font-size:12px">33</div><div class="t" style="left:897px;top:1105px;font-size:12px">2021-03-09 09</div><div class="t" style="left:1100px;top:1105px;font-size:12px;letter-spacing:-0.25px">Hoeveelhe...</div><div class="t" style="left:1169px;width:135px;text-align:right;top:1105px;font-size:12px">430.5</div><div class="t" style="left:1307px;width:135px;text-align:right;top:1105px;font-size:12px">430.5</div><div class="t" style="left:1445px;width:139px;text-align:right;top:1105px;font-size:12px">0</div><div class="a" style="left:853px;top:1148px;width:734px;height:1px;background:#dde0e6"></div><div class="t" style="left:853px;width:38px;text-align:center;top:1130px;font-size:12px">34</div><div class="t" style="left:897px;top:1130px;font-size:12px">2021-03-10 09</div><div class="t" style="left:1100px;top:1130px;font-size:12px;letter-spacing:-0.25px">Hoeveelhe...</div><div class="t" style="left:1169px;width:135px;text-align:right;top:1130px;font-size:12px">430.5</div><div class="t" style="left:1307px;width:135px;text-align:right;top:1130px;font-size:12px">430.5</div><div class="t" style="left:1445px;width:139px;text-align:right;top:1130px;font-size:12px">0</div><div class="a" style="left:853px;top:1173px;width:734px;height:1px;background:#dde0e6"></div><div class="t" style="left:853px;width:38px;text-align:center;top:1155px;font-size:12px">35</div><div class="t" style="left:897px;top:1155px;font-size:12px">2021-03-10 15</div><div class="t" style="left:1100px;top:1155px;font-size:12px;letter-spacing:-0.25px">Hoeveelhe...</div><div class="t" style="left:1169px;width:135px;text-align:right;top:1155px;font-size:12px">430.5</div><div class="t" style="left:1307px;width:135px;text-align:right;top:1155px;font-size:12px">430.5</div><div class="t" style="left:1445px;width:139px;text-align:right;top:1155px;font-size:12px">0</div><div class="a" style="left:853px;top:1198px;width:734px;height:1px;background:#dde0e6"></div><div class="t" style="left:853px;width:38px;text-align:center;top:1180px;font-size:12px">36</div><div class="t" style="left:897px;top:1180px;font-size:12px">2021-03-10 16</div><div class="t" style="left:1100px;top:1180px;font-size:12px;letter-spacing:-0.25px">Hoeveelhe...</div><div class="t" style="left:1169px;width:135px;text-align:right;top:1180px;font-size:12px">430.5</div><div class="t" style="left:1307px;width:135px;text-align:right;top:1180px;font-size:12px">430.5</div><div class="t" style="left:1445px;width:139px;text-align:right;top:1180px;font-size:12px">0</div><div class="a" style="left:853px;top:1223px;width:734px;height:1px;background:#dde0e6"></div><div class="t" style="left:853px;width:38px;text-align:center;top:1205px;font-size:12px">37</div><div class="t" style="left:897px;top:1205px;font-size:12px">2021-03-10 19</div><div class="t" style="left:1100px;top:1205px;font-size:12px;letter-spacing:-0.25px">Hoeveelhe...</div><div class="t" style="left:1169px;width:135px;text-align:right;top:1205px;font-size:12px">431</div><div class="t" style="left:1307px;width:135px;text-align:right;top:1205px;font-size:12px">431.5</div><div class="t" style="left:1445px;width:139px;text-align:right;top:1205px;font-size:12px">0.5</div><div class="a" style="left:853px;top:1248px;width:734px;height:1px;background:#dde0e6"></div><div class="t" style="left:853px;width:38px;text-align:center;top:1230px;font-size:12px">38</div><div class="t" style="left:897px;top:1230px;font-size:12px">2021-03-10 20</div><div class="t" style="left:1100px;top:1230px;font-size:12px;letter-spacing:-0.25px">Hoeveelhe...</div><div class="t" style="left:1169px;width:135px;text-align:right;top:1230px;font-size:12px">431.5</div><div class="t" style="left:1307px;width:135px;text-align:right;top:1230px;font-size:12px">432</div><div class="t" style="left:1445px;width:139px;text-align:right;top:1230px;font-size:12px">0.5</div><div class="a" style="left:853px;top:1273px;width:734px;height:1px;background:#dde0e6"></div><div class="t" style="left:853px;width:38px;text-align:center;top:1255px;font-size:12px">39</div><div class="t" style="left:897px;top:1255px;font-size:12px">2021-03-10 21</div><div class="t" style="left:1100px;top:1255px;font-size:12px;letter-spacing:-0.25px">Hoeveelhe...</div><div class="t" style="left:1169px;width:135px;text-align:right;top:1255px;font-size:12px">432.5</div><div class="t" style="left:1307px;width:135px;text-align:right;top:1255px;font-size:12px">432.5</div><div class="t" style="left:1445px;width:139px;text-align:right;top:1255px;font-size:12px">0</div><div class="a" style="left:853px;top:1298px;width:734px;height:1px;background:#dde0e6"></div><div class="t" style="left:853px;width:38px;text-align:center;top:1280px;font-size:12px">40</div><div class="t" style="left:897px;top:1280px;font-size:12px">2021-03-11 03</div><div class="t" style="left:1100px;top:1280px;font-size:12px;letter-spacing:-0.25px">Hoeveelhe...</div><div class="t" style="left:1169px;width:135px;text-align:right;top:1280px;font-size:12px">433</div><div class="t" style="left:1307px;width:135px;text-align:right;top:1280px;font-size:12px">433.5</div><div class="t" style="left:1445px;width:139px;text-align:right;top:1280px;font-size:12px">0.5</div><div class="a" style="left:853px;top:1323px;width:734px;height:1px;background:#dde0e6"></div><div class="t" style="left:853px;width:38px;text-align:center;top:1305px;font-size:12px">41</div><div class="t" style="left:897px;top:1305px;font-size:12px">2021-03-11 04</div><div class="t" style="left:1100px;top:1305px;font-size:12px;letter-spacing:-0.25px">Hoeveelhe...</div><div class="t" style="left:1169px;width:135px;text-align:right;top:1305px;font-size:12px">434</div><div class="t" style="left:1307px;width:135px;text-align:right;top:1305px;font-size:12px">434.5</div><div class="t" style="left:1445px;width:139px;text-align:right;top:1305px;font-size:12px">0.5</div><div class="a" style="left:853px;top:1348px;width:734px;height:1px;background:#dde0e6"></div><div class="t" style="left:853px;width:38px;text-align:center;top:1330px;font-size:12px">42</div><div class="t" style="left:897px;top:1330px;font-size:12px">2021-03-11 14</div><div class="t" style="left:1100px;top:1330px;font-size:12px;letter-spacing:-0.25px">Hoeveelhe...</div><div class="t" style="left:1169px;width:135px;text-align:right;top:1330px;font-size:12px">435.5</div><div class="t" style="left:1307px;width:135px;text-align:right;top:1330px;font-size:12px">436</div><div class="t" style="left:1445px;width:139px;text-align:right;top:1330px;font-size:12px">0.5</div><div class="a" style="left:853px;top:1048px;width:734px;height:2px;background:#4677a0"></div><div class="a" style="left:853px;top:1073px;width:734px;height:2px;background:#4677a0"></div><div class="a" style="left:853px;top:451px;width:1428px;height:1px;background:#dde0e6"></div><div class="a" style="left:891px;top:412px;width:1px;height:937px;background:#dde0e6"></div><div class="a" style="left:1094px;top:412px;width:1px;height:937px;background:#dde0e6"></div><div class="a" style="left:1169px;top:412px;width:1px;height:937px;background:#dde0e6"></div><div class="a" style="left:1307px;top:412px;width:1px;height:937px;background:#dde0e6"></div><div class="a" style="left:1445px;top:412px;width:1px;height:937px;background:#dde0e6"></div><div class="a" style="left:1587px;top:412px;width:1px;height:937px;background:#dde0e6"></div><div class="a" style="left:853px;top:1348px;width:734px;height:1px;background:#dde0e6"></div><svg style="left:876px;top:436px" width="12" height="12" viewBox="0 0 12 12"><path d="M11 1V11H1Z" fill="#6a6a6a"/></svg><div class="t" style="left:897px;top:418px;font-size:11.5px;font-weight:bold;letter-spacing:-0.28px">to_char</div><div class="t" style="left:897px;top:434px;font-size:12px;color:#333">text</div><svg style="left:1077px;top:424px" width="11" height="14" viewBox="0 0 11 14"><path d="M2.5 6V4.2a3 3 0 0 1 6 0V6" stroke="#222" stroke-width="1.8" fill="none"/><rect x="0.5" y="6" width="10" height="7.5" rx="1" fill="#222"/></svg><div class="t" style="left:1100px;top:418px;font-size:11.5px;font-weight:bold;letter-spacing:-0.28px">metric</div><div class="t" style="left:1100px;top:434px;font-size:12px;color:#333">text</div><svg style="left:1152px;top:424px" width="11" height="14" viewBox="0 0 11 14"><path d="M2.5 6V4.2a3 3 0 0 1 6 0V6" stroke="#222" stroke-width="1.8" fill="none"/><rect x="0.5" y="6" width="10" height="7.5" rx="1" fill="#222"/></svg><div class="t" style="left:1176px;top:418px;font-size:11.5px;font-weight:bold;letter-spacing:-0.28px">hour_min</div><div class="t" style="left:1176px;top:434px;font-size:12px;color:#333">double precision</div><svg style="left:1290px;top:424px" width="11" height="14" viewBox="0 0 11 14"><path d="M2.5 6V4.2a3 3 0 0 1 6 0V6" stroke="#222" stroke-width="1.8" fill="none"/><rect x="0.5" y="6" width="10" height="7.5" rx="1" fill="#222"/></svg><div class="t" style="left:1314px;top:418px;font-size:11.5px;font-weight:bold;letter-spacing:-0.28px">hour_max</div><div class="t" style="left:1314px;top:434px;font-size:12px;color:#333">double precision</div><svg style="left:1428px;top:424px" width="11" height="14" viewBox="0 0 11 14"><path d="M2.5 6V4.2a3 3 0 0 1 6 0V6" stroke="#222" stroke-width="1.8" fill="none"/><rect x="0.5" y="6" width="10" height="7.5" rx="1" fill="#222"/></svg><div class="t" style="left:1452px;top:418px;font-size:11.5px;font-weight:bold;letter-spacing:-0.28px">hourly_difference</div><div class="t" style="left:1452px;top:434px;font-size:12px;color:#333">double precision</div><svg style="left:1570px;top:424px" width="11" height="14" viewBox="0 0 11 14"><path d="M2.5 6V4.2a3 3 0 0 1 6 0V6" stroke="#222" stroke-width="1.8" fill="none"/><rect x="0.5" y="6" width="10" height="7.5" rx="1" fill="#222"/></svg><div class="t" style="left:864px;top:388px;font-size:14px;color:#326690;font-weight:normal;letter-spacing:-0.2px;">Data Output</div><div class="t" style="left:958px;top:388px;font-size:14px;color:#222;font-weight:normal;letter-spacing:-0.2px;">Explain</div><div class="t" style="left:1023px;top:388px;font-size:14px;color:#222;font-weight:normal;">Messages</div><div class="t" style="left:1106px;top:388px;font-size:14px;color:#222;font-weight:normal;letter-spacing:0.25px;">Notifications</div><div class="a" style="left:853px;top:408px;width:95px;height:3px;background:#326690"></div><div class="a" style="left:948px;top:411px;width:1345px;height:1px;background:#dde0e6"></div><div class="a" style="left:1587px;top:452px;width:694px;height:897px;background:#ebeef3"></div><div class="a" style="left:2281px;top:412px;width:12px;height:937px;background:#e7e9ef"></div><div class="a" style="left:2285px;top:587px;width:8px;height:762px;background:#c5c9d3;border-radius:4px 0 0 4px"></div><div class="a" style="left:857px;top:67px;width:29px;height:28px;background:#fff;border:1px solid #cdd1d8;border-radius:4px"></div><svg style="left:865.5px;top:75.0px" width="12" height="13" viewBox="0 0 12 13"><g transform="scale(0.8)"><ellipse cx="6.5" cy="2.4" rx="6.5" ry="2.4" fill="#222"/><path d="M0 5.3Q3 6.6 7.2 6.3V9.5Q3 9.7 0 8.5Z" fill="#222"/><path d="M0 10.3Q3 11.4 7.2 11.2V15Q3 15 0 13.6Z" fill="#222"/><path d="M8.8 6.1Q11.5 5.8 13 5V7.3L8.8 9.3Z" fill="#222"/><path d="M8.2 7.8 15 11.8 8.2 16Z" fill="#222"/></g></svg><div class="a" style="left:896px;top:67px;width:82px;height:28px;background:#fff;border:1px solid #cdd1d8;border-radius:4px"></div><div class="a" style="left:927px;top:67px;width:1px;height:28px;background:#cdd1d8"></div><div class="a" style="left:957px;top:67px;width:1px;height:28px;background:#cdd1d8"></div><svg style="left:903.5px;top:74.5px" width="16" height="13" viewBox="0 0 16 13"><path d="M0.5 1.5h5l1.5 1.5h6v2H3L0.5 11.5Z" fill="#222"/><path d="M3.5 5.5h12l-3 6.5H0.8Z" fill="#222"/></svg><svg style="left:935.5px;top:74.5px" width="13" height="13" viewBox="0 0 13 13"><path d="M0.5 0.5h10l2 2v10h-12Z" fill="#222"/><rect x="3" y="1.5" width="6" height="3.5" fill="#fff"/><circle cx="6.5" cy="9" r="1.8" fill="#fff"/></svg><svg style="left:962.5px;top:76px" width="10" height="6" viewBox="0 0 10 6"><path d="M1 1 5 5 9 1" stroke="#222" stroke-width="1.4" fill="none"/></svg><div class="a" style="left:988px;top:67px;width:32px;height:28px;background:#f8f9fb;border:1px solid #cdd1d8;border-radius:4px"></div><svg style="left:996.0px;top:74.5px" width="16" height="13" viewBox="0 0 16 13"><rect x="0.5" y="0.5" width="15" height="12" fill="none" stroke="#6e6e6e" stroke-width="1.2"/><path d="M0.5 4.5h15M0.5 8.5h15M5.5 0.5v12M10.5 0.5v12" stroke="#6e6e6e" stroke-width="1.2"/><path d="M8 2v7M5 6.5 8 9.5 11 6.5" stroke="#6e6e6e" stroke-width="2" fill="#fff"/></svg><div class="a" style="left:1030px;top:67px;width:51px;height:28px;background:#fff;border:1px solid #cdd1d8;border-radius:4px"></div><div class="a" style="left:1060px;top:67px;width:1px;height:28px;background:#cdd1d8"></div><svg style="left:1038.0px;top:74.0px" width="14" height="14" viewBox="0 0 14 14"><circle cx="5.5" cy="5.5" r="4.3" stroke="#222" stroke-width="2.2" fill="none"/><path d="M8.8 8.8 12.8 12.8" stroke="#222" stroke-width="2.4" stroke-linecap="round"/></svg><svg style="left:1065.5px;top:76px" width="10" height="6" viewBox="0 0 10 6"><path d="M1 1 5 5 9 1" stroke="#222" stroke-width="1.4" fill="none"/></svg><div class="a" style="left:1090px;top:67px;width:79px;height:28px;background:#f8f9fb;border:1px solid #cdd1d8;border-radius:4px"></div><div class="a" style="left:1119px;top:67px;width:1px;height:28px;background:#cdd1d8"></div><div class="a" style="left:1140px;top:67px;width:1px;height:28px;background:#cdd1d8"></div><div class="a" style="left:1119px;top:67px;width:22px;height:28px;background:#fff"></div><div class="a" style="left:1119px;top:67px;width:1px;height:28px;background:#cdd1d8"></div><div class="a" style="left:1140px;top:67px;width:1px;height:28px;background:#cdd1d8"></div><svg style="left:1098.0px;top:74.0px" width="12" height="14" viewBox="0 0 12 14"><path d="M3.5 0.5h5l3 3v7.5h-8Z" fill="#6e6e6e"/><path d="M0.5 3.5h2v9h6v1.5h-8Z" fill="#6e6e6e"/></svg><svg style="left:1125px;top:76px" width="10" height="6" viewBox="0 0 10 6"><path d="M1 1 5 5 9 1" stroke="#222" stroke-width="1.4" fill="none"/></svg><svg style="left:1148.5px;top:74.0px" width="13" height="14" viewBox="0 0 13 14"><path d="M1 1h6v3h-3v8H1Z" fill="#6e6e6e"/><rect x="2.5" y="0" width="3" height="2" fill="#6e6e6e"/><path d="M5 5h4.5l3 3v6H5Z" fill="#6e6e6e"/></svg><div class="a" style="left:1179px;top:67px;width:28px;height:28px;background:#f8f9fb;border:1px solid #cdd1d8;border-radius:4px"></div><svg style="left:1187.0px;top:74.0px" width="12" height="14" viewBox="0 0 12 14"><path d="M0 2h12M4 0.8h4" stroke="#6e6e6e" stroke-width="1.6"/><path d="M1.5 3.5h9l-0.7 10H2.2Z" fill="#6e6e6e"/><path d="M4 5.5v6M6 5.5v6M8 5.5v6" stroke="#f8f9fb" stroke-width="1"/></svg><div class="a" style="left:1217px;top:67px;width:43px;height:28px;background:#fff;border:1px solid #cdd1d8;border-radius:4px"></div><svg style="left:1224.0px;top:73.5px" width="16" height="15" viewBox="0 0 16 15"><path d="M8.5 2.5H1.5v11h11V7" stroke="#222" stroke-width="2" fill="none"/><path d="M6 10l1-3.5L13.5 0l2.5 2.5L9.5 9Z" fill="#222"/></svg><svg style="left:1244px;top:76px" width="10" height="6" viewBox="0 0 10 6"><path d="M1 1 5 5 9 1" stroke="#222" stroke-width="1.4" fill="none"/></svg><div class="a" style="left:1269px;top:67px;width:66px;height:28px;background:#f8f9fb;border:1px solid #cdd1d8;border-radius:4px"></div><div class="a" style="left:1307px;top:67px;width:1px;height:28px;background:#cdd1d8"></div><svg style="left:1281.0px;top:74.0px" width="14" height="14" viewBox="0 0 14 14"><path d="M0 0.5h14L8.5 7v7l-3-2.5V7Z" fill="#6e6e6e"/></svg><svg style="left:1316px;top:76px" width="10" height="6" viewBox="0 0 10 6"><path d="M1 1 5 5 9 1" stroke="#6e6e6e" stroke-width="1.4" fill="none"/></svg><div class="a" style="left:1344px;top:67px;width:96px;height:28px;background:#f8f9fb;border:1px solid #cdd1d8;border-radius:4px"></div><div class="t" style="left:1356px;top:75px;font-size:13px;color:#6e6e6e">No limit</div><svg style="left:1425px;top:77px" width="10" height="6" viewBox="0 0 10 6"><path d="M1 1 5 5 9 1" stroke="#555" stroke-width="1.4" fill="none"/></svg><div class="a" style="left:1450px;top:67px;width:80px;height:28px;background:#fff;border:1px solid #cdd1d8;border-radius:4px"></div><div class="a" style="left:1478px;top:67px;width:1px;height:28px;background:#cdd1d8"></div><div class="a" style="left:1509px;top:67px;width:1px;height:28px;background:#cdd1d8"></div><div class="a" style="left:1451px;top:68px;width:27px;height:26px;background:#f8f9fb;border-radius:3px 0 0 3px"></div><svg style="left:1458.0px;top:75.0px" width="12" height="12" viewBox="0 0 12 12"><rect x="0" y="0" width="12" height="12" rx="1.5" fill="#6e6e6e"/></svg><svg style="left:1488.0px;top:73.5px" width="12" height="15" viewBox="0 0 12 15"><path d="M0.5 0.5 11.5 7.5 0.5 14.5Z" fill="#222"/></svg><svg style="left:1514.5px;top:76px" width="10" height="6" viewBox="0 0 10 6"><path d="M1 1 5 5 9 1" stroke="#222" stroke-width="1.4" fill="none"/></svg><div class="a" style="left:1540px;top:67px;width:80px;height:28px;background:#fff;border:1px solid #cdd1d8;border-radius:4px"></div><div class="a" style="left:1568px;top:67px;width:1px;height:28px;background:#cdd1d8"></div><div class="a" style="left:1599px;top:67px;width:1px;height:28px;background:#cdd1d8"></div><svg style="left:1546.5px;top:73.0px" width="14" height="16" viewBox="0 0 14 16"><path d="M4 1v7.5L2.5 7.2C1.2 6.4 0.2 7.6 1 8.7L4.5 14h8l1-5.5V7.5c0-1-1.5-1.2-1.8 0V7c0-1.2-1.6-1.2-1.8 0V6.5c0-1.2-1.6-1.2-1.8 0V1c0-1.3-2.1-1.3-2.1 0Z" fill="#222"/></svg><svg style="left:1575.5px;top:74.5px" width="16" height="13" viewBox="0 0 16 13"><rect x="1" y="1" width="14" height="11" fill="none" stroke="#222" stroke-width="2"/><path d="M1 4.5h14M1 7.5h14M5 1v11" stroke="#222" stroke-width="1.5"/></svg><svg style="left:1604.5px;top:76px" width="10" height="6" viewBox="0 0 10 6"><path d="M1 1 5 5 9 1" stroke="#222" stroke-width="1.4" fill="none"/></svg><div class="a" style="left:1630px;top:67px;width:61px;height:28px;background:#f8f9fb;border:1px solid #cdd1d8;border-radius:4px"></div><div class="a" style="left:1660px;top:67px;width:1px;height:28px;background:#cdd1d8"></div><svg style="left:1637.0px;top:74.0px" width="16" height="14" viewBox="0 0 16 14"><ellipse cx="7" cy="2.5" rx="5.5" ry="2.2" fill="#6e6e6e"/><path d="M1.5 4.5a5.5 2 0 0 0 6 2M0 7.5h5M0 10.5h4" stroke="#6e6e6e" stroke-width="1.4" fill="none"/><circle cx="11" cy="9.5" r="4" fill="#6e6e6e"/><path d="M9 9.5l1.5 1.5 2.5-2.5" stroke="#fff" stroke-width="1.2" fill="none"/></svg><svg style="left:1668.0px;top:74.0px" width="16" height="14" viewBox="0 0 16 14"><ellipse cx="7" cy="2.5" rx="5.5" ry="2.2" fill="#6e6e6e"/><path d="M1.5 4.5a5.5 2 0 0 0 6 2M0 7.5h5M0 10.5h4" stroke="#6e6e6e" stroke-width="1.4" fill="none"/><circle cx="11" cy="9.5" r="4" fill="#6e6e6e"/><path d="M12.5 11a1.8 1.8 0 1 0-1.5-3H9.5" stroke="#fff" stroke-width="1.1" fill="none"/></svg><div class="a" style="left:1700px;top:67px;width:42px;height:28px;background:#fff;border:1px solid #cdd1d8;border-radius:4px"></div><svg style="left:1706.5px;top:74.5px" width="16" height="13" viewBox="0 0 16 13"><path d="M9 0.8 15 6.5 9.5 12H3.5L0.8 9.3Z" fill="#222"/><path d="M4.5 5.2 1.7 8 4.3 10.6h4.4l1-1Z" fill="#fff"/><path d="M8 12h5" stroke="#222" stroke-width="1.5"/></svg><svg style="left:1725px;top:76px" width="10" height="6" viewBox="0 0 10 6"><path d="M1 1 5 5 9 1" stroke="#222" stroke-width="1.4" fill="none"/></svg><div class="a" style="left:1750px;top:67px;width:31px;height:28px;background:#fff;border:1px solid #cdd1d8;border-radius:4px"></div><svg style="left:1759.0px;top:74.0px" width="14" height="14" viewBox="0 0 14 14"><path d="M5.5 0h3v6h3L7 10.5 2.5 6h3Z" fill="#222"/><path d="M0 9.5h4.5L7 12l2.5-2.5H14V14H0Z" fill="#222"/><rect x="10" y="11.5" width="1" height="1" fill="#fff"/><rect x="12" y="11.5" width="1" height="1" fill="#fff"/></svg><div class="a" style="left:1786px;top:67px;width:46px;height:28px;background:#fff;border:1px solid #cdd1d8;border-radius:4px"></div><svg style="left:1796.0px;top:74.0px" width="17" height="14" viewBox="0 0 17 14"><rect x="0" y="0" width="2" height="3" fill="#222"/><path d="M3 0h8a2 2 0 0 1 2 2v8.5H7v2.5a1.5 1.5 0 0 1-3 0Z" fill="#222"/><path d="M6.5 11h10l-1 2.5a1.2 1.2 0 0 1-1 .5H5.5" fill="#222"/></svg><svg style="left:1815px;top:76px" width="10" height="6" viewBox="0 0 10 6"><path d="M1 1 5 5 9 1" stroke="#222" stroke-width="1.4" fill="none"/></svg><svg style="left:863.5px;top:103.5px" width="18" height="17" viewBox="0 0 18 17"><g stroke="#fff" stroke-width="1.6" fill="none"><path d="M0.8 16.2l2.2-2.2"/><path d="M17.2 0.8 15 3"/><path d="M7.6 9.4l1-1"/><rect x="2.6" y="8.2" width="5.4" height="8.4" rx="2.7" transform="rotate(45 5.3 12.4)"/><rect x="10" y="0.8" width="5.4" height="8.4" rx="2.7" transform="rotate(45 12.7 5)"/></g></svg><svg style="left:1272px;top:109px" width="10" height="6" viewBox="0 0 10 6"><path d="M1 1 5 5 9 1" stroke="#fff" stroke-width="1.8" fill="none"/></svg><svg style="left:1361.0px;top:40.5px" width="14" height="15" viewBox="0 0 14 15"><ellipse cx="6" cy="2.5" rx="5.5" ry="2.3" fill="#326690"/><path d="M0.5 3.5v8a5.5 2.3 0 0 0 8 2" fill="#326690"/><path d="M0.5 6.5a5.5 2 0 0 0 11 0M0.5 9.5a5.5 2 0 0 0 7 1.5" stroke="#fff" stroke-width="1" fill="none"/><path d="M8 6.5 13.5 10 8 13.5Z" fill="#326690" stroke="#fff" stroke-width="0.8"/></svg><svg style="left:2276.0px;top:43.0px" width="10" height="10" viewBox="0 0 10 10"><path d="M1 1 9 9M9 1 1 9" stroke="#111" stroke-width="2.2"/></svg><svg style="left:2276.0px;top:134.5px" width="10" height="10" viewBox="0 0 10 10"><path d="M1 1 9 9M9 1 1 9" stroke="#111" stroke-width="2.2"/></svg><svg style="left:737.5px;top:42.0px" width="15" height="16" viewBox="0 0 15 16"><ellipse cx="6.5" cy="2.4" rx="6.5" ry="2.4" fill="#222"/><path d="M0 5.3Q3 6.6 7.2 6.3V9.5Q3 9.7 0 8.5Z" fill="#222"/><path d="M0 10.3Q3 11.4 7.2 11.2V15Q3 15 0 13.6Z" fill="#222"/><path d="M8.8 6.1Q11.5 5.8 13 5V7.3L8.8 9.3Z" fill="#222"/><path d="M8.2 7.8 15 11.8 8.2 16Z" fill="#222"/></svg><svg style="left:767.0px;top:41.0px" width="17" height="14" viewBox="0 0 17 14"><rect x="1" y="1" width="15.5" height="12.5" rx="1" fill="none" stroke="#222" stroke-width="1.6"/><rect x="1" y="0.3" width="15.5" height="2.6" fill="#222"/><path d="M1 6.5h15.5M1 10h15.5M6 1v12.5M11.3 1v12.5" stroke="#222" stroke-width="1.3"/></svg><svg style="left:797.5px;top:42.5px" width="16" height="14" viewBox="0 0 16 14"><path d="M0 0.5h11L6.8 5v8.5L4.2 11V5Z" fill="#222"/><rect x="7.5" y="6.5" width="8" height="7" fill="none" stroke="#222" stroke-width="1.2"/><path d="M7.5 9h8M7.5 11.3h8M11.5 6.5v7" stroke="#222" stroke-width="1"/></svg><svg style="left:828.0px;top:41.5px" width="15" height="15" viewBox="0 0 15 15"><circle cx="6" cy="6" r="4.6" stroke="#222" stroke-width="2.2" fill="none"/><path d="M9.5 9.5 13.8 13.8" stroke="#222" stroke-width="2.4" stroke-linecap="round"/></svg><div class="a" style="left:2276px;top:1245px;width:41px;height:41px;border-radius:50%;background:#000;border:1.5px solid #3a5560;box-shadow:0 0 2px #889"></div><div class="a" style="left:0px;top:1368px;width:2293px;height:2px;background:#000"></div></body></html>
